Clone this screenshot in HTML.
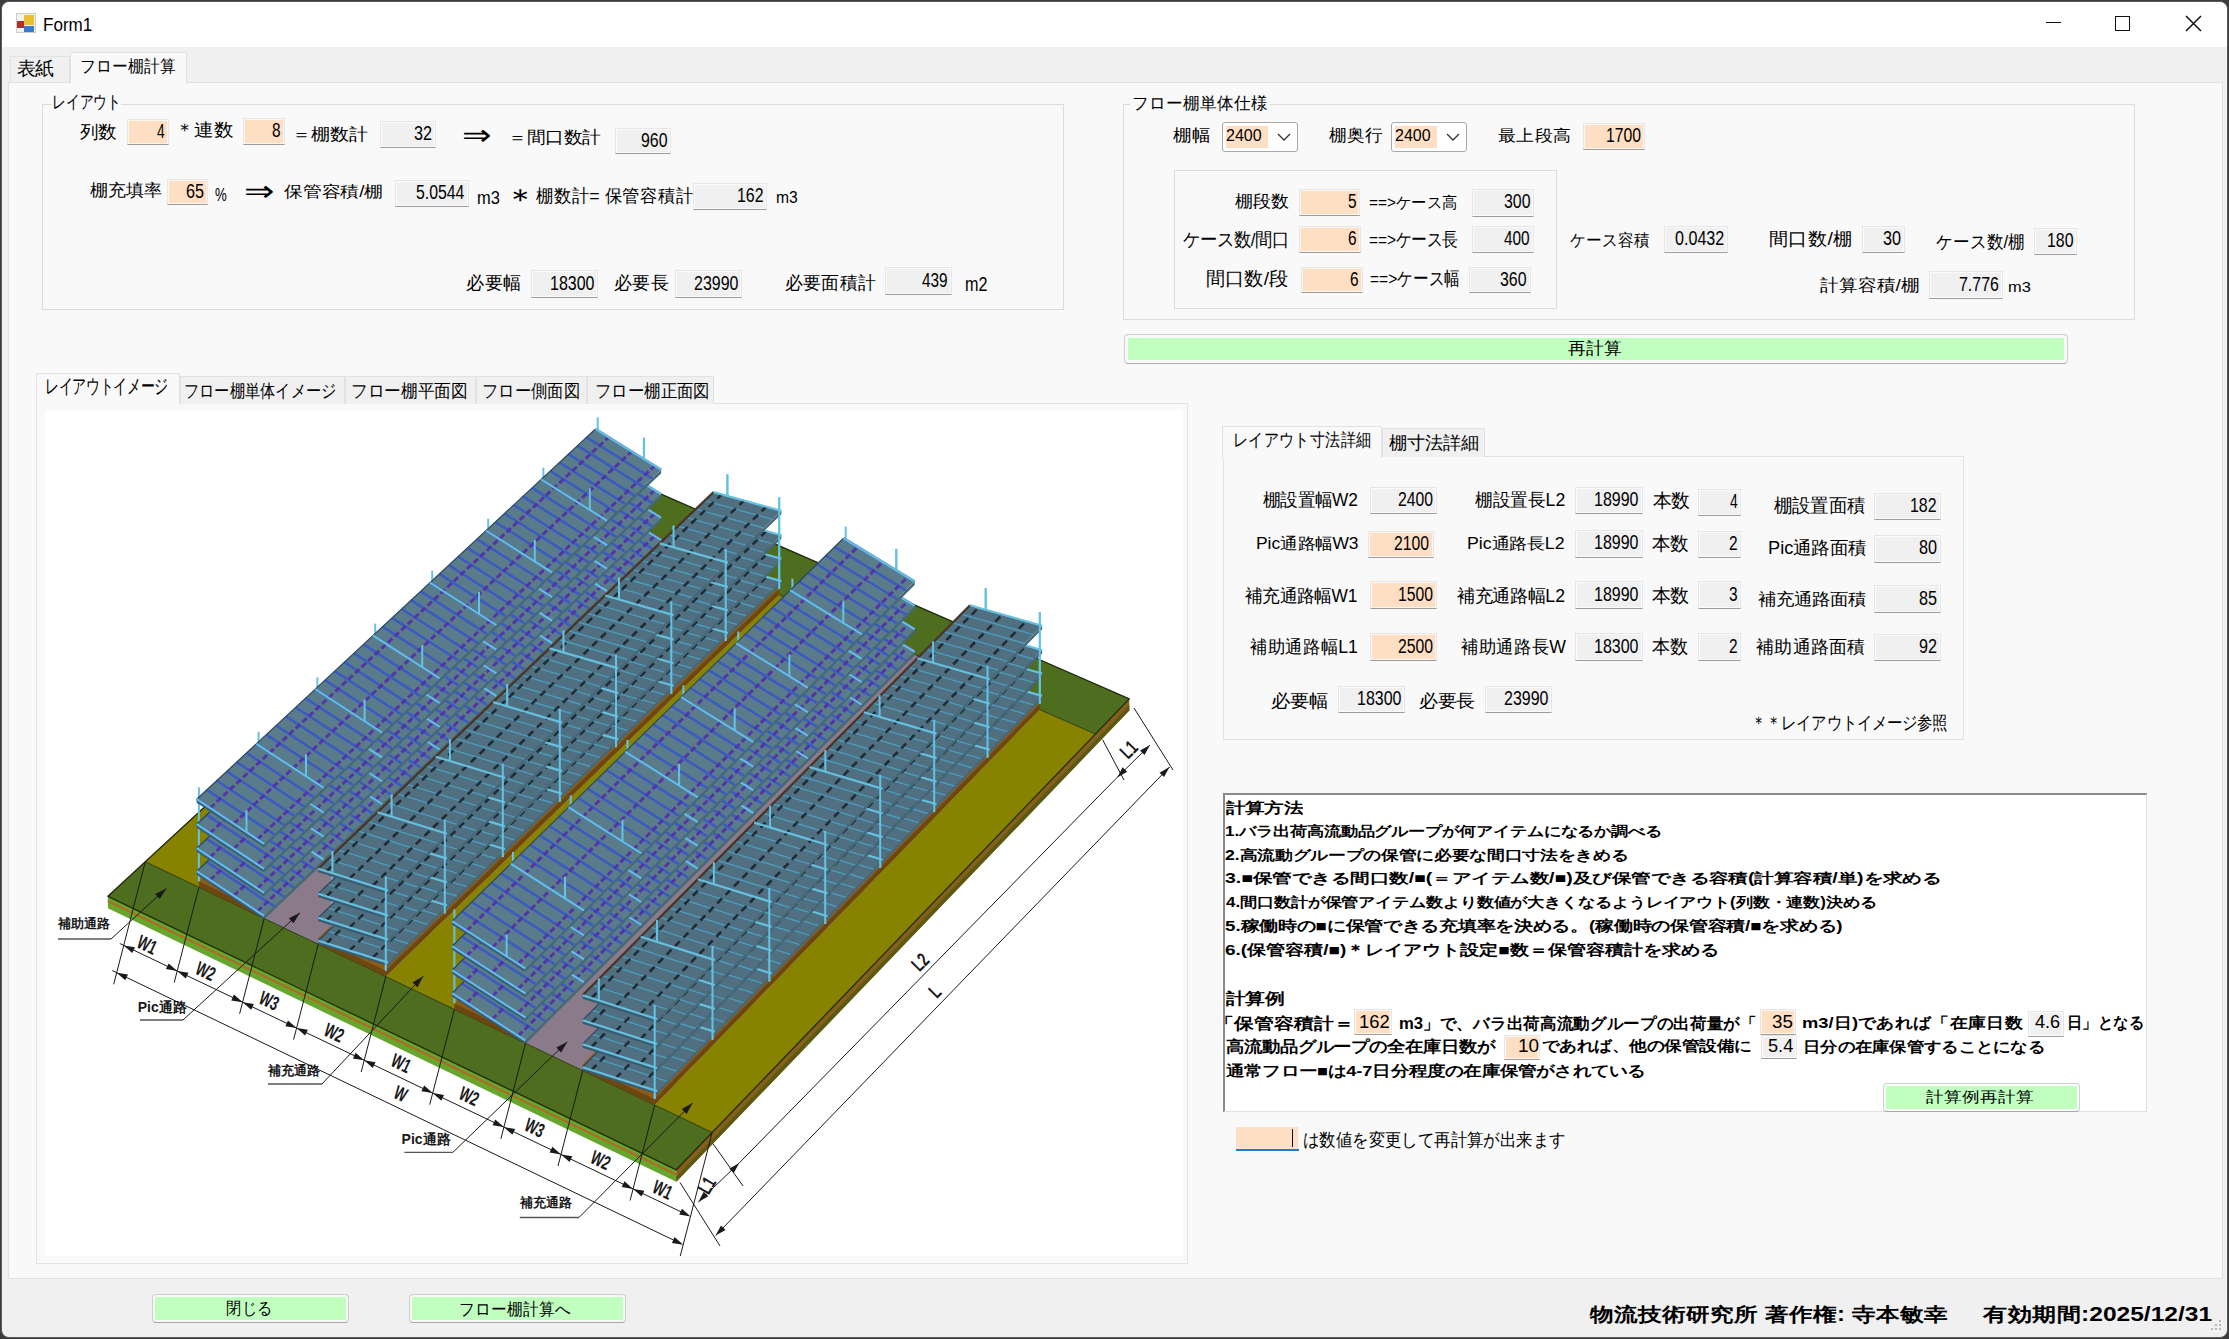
<!DOCTYPE html><html><head><meta charset="utf-8"><style>
html,body{margin:0;padding:0}
body{width:2229px;height:1339px;position:relative;overflow:hidden;background:#3c3c3c;font-family:'Liberation Sans',sans-serif}
body>div,body>svg{position:absolute}
#win{left:1px;top:1px;width:2227px;height:1337px;background:#f0f0f0;border-radius:8px;border:1px solid #5a5a5a;box-sizing:border-box}
.bx{border:1px solid #e6e6e6;border-bottom:1.6px solid #9c9c9c;box-sizing:border-box;box-shadow:inset 0 0 0 1px rgba(255,255,255,.7)}
.t{font-size:19px;line-height:1;white-space:pre;color:#000;transform-origin:0 0}
.t.b{font-weight:bold}
.t.lat{font-size:18px}
</style></head><body><div id="win"></div>
<div style="left:2.0px;top:2.0px;width:2225.0px;height:45.0px;background:#fff;border-radius:8px 8px 0 0"></div>
<div style="left:16px;top:13px;width:20px;height:20px;background:#f2f2f2;border:1px solid #ccc;box-sizing:border-box"></div>
<div style="left:24.0px;top:15.0px;width:10.0px;height:10.0px;background:#e8c030"></div>
<div style="left:17.0px;top:21.0px;width:7.0px;height:7.0px;background:#b03030"></div>
<div style="left:24.0px;top:26.0px;width:10.0px;height:6.0px;background:#3a7ad0"></div>
<div style="left:2046.0px;top:22.0px;width:15.0px;height:1.0px;background:#111"></div>
<div style="left:2115.0px;top:16.0px;width:15.0px;height:15.0px;border:1.5px solid #111;box-sizing:border-box"></div>
<svg style="position:absolute;left:2185px;top:15px" width="17" height="17"><path d="M1 1L16 16M16 1L1 16" stroke="#111" stroke-width="1.5"/></svg>
<div style="left:10.0px;top:56.0px;width:60.0px;height:27.0px;background:#f0f0f0;border:1px solid #e2e2e2;border-bottom:none;box-sizing:border-box"></div>
<div style="left:8.0px;top:82.0px;width:2215.0px;height:1197.0px;background:#f9f9f9;border:1px solid #e2e2e2;box-sizing:border-box"></div>
<div style="left:70.0px;top:52.0px;width:117.0px;height:32.0px;background:#f9f9f9;border:1px solid #e2e2e2;border-bottom:none;box-sizing:border-box"></div>
<div style="left:42.0px;top:104.0px;width:1022.0px;height:206.0px;border:1px solid #dcdcdc;box-sizing:border-box"></div>
<div style="left:52.0px;top:96.0px;width:69.0px;height:12.0px;background:#f9f9f9"></div>
<div style="left:1123.0px;top:104.0px;width:1012.0px;height:216.0px;border:1px solid #dcdcdc;box-sizing:border-box"></div>
<div style="left:1130.0px;top:96.0px;width:140.0px;height:12.0px;background:#f9f9f9"></div>
<div style="left:1174.0px;top:170.0px;width:383.0px;height:139.0px;border:1px solid #dcdcdc;box-sizing:border-box"></div>
<div style="left:1221.8px;top:122.0px;width:76.2px;height:29.5px;background:#fff;border:1px solid #a8a8a8;border-radius:3px;box-sizing:border-box"></div>
<div style="left:1225.6px;top:126.0px;width:42.9px;height:21.6px;background:#ffdfc3"></div>
<svg style="position:absolute;left:1276.8px;top:133px" width="14" height="9"><path d="M1 1L7 7L13 1" stroke="#333" stroke-width="1.3" fill="none"/></svg>
<div style="left:1391.0px;top:122.0px;width:76.2px;height:29.5px;background:#fff;border:1px solid #a8a8a8;border-radius:3px;box-sizing:border-box"></div>
<div style="left:1394.8px;top:126.0px;width:42.2px;height:21.6px;background:#ffdfc3"></div>
<svg style="position:absolute;left:1446.0px;top:133px" width="14" height="9"><path d="M1 1L7 7L13 1" stroke="#333" stroke-width="1.3" fill="none"/></svg>
<div style="left:1124.0px;top:334.0px;width:944.0px;height:30.0px;background:#c0ffc0;border:1px solid #d0d0d0;border-bottom:1.5px solid #b0b0b0;border-radius:4px;box-sizing:border-box;box-shadow:inset 0 0 0 3px #f9f9f9"></div>
<div style="left:36.0px;top:403.0px;width:1152.0px;height:861.0px;background:#f9f9f9;border:1px solid #e2e2e2;box-sizing:border-box"></div>
<div style="left:45.0px;top:410.0px;width:1138.0px;height:846.0px;background:#fff"></div>
<div style="left:180.0px;top:376.0px;width:164.6px;height:28.0px;background:#f0f0f0;border:1px solid #e2e2e2;border-bottom:none;box-sizing:border-box"></div>
<div style="left:345.0px;top:376.0px;width:130.5px;height:28.0px;background:#f0f0f0;border:1px solid #e2e2e2;border-bottom:none;box-sizing:border-box"></div>
<div style="left:476.0px;top:376.0px;width:110.8px;height:28.0px;background:#f0f0f0;border:1px solid #e2e2e2;border-bottom:none;box-sizing:border-box"></div>
<div style="left:587.0px;top:376.0px;width:127.0px;height:28.0px;background:#f0f0f0;border:1px solid #e2e2e2;border-bottom:none;box-sizing:border-box"></div>
<div style="left:36.0px;top:373.0px;width:144.0px;height:32.0px;background:#f9f9f9;border:1px solid #e2e2e2;border-bottom:none;box-sizing:border-box"></div>
<div style="left:1222.6px;top:456.0px;width:741.9px;height:284.0px;background:#f9f9f9;border:1px solid #e2e2e2;box-sizing:border-box"></div>
<div style="left:1382.0px;top:428.0px;width:102.7px;height:29.0px;background:#f0f0f0;border:1px solid #e2e2e2;border-bottom:none;box-sizing:border-box"></div>
<div style="left:1222.2px;top:425.5px;width:160.2px;height:32.5px;background:#f9f9f9;border:1px solid #e2e2e2;border-bottom:none;box-sizing:border-box"></div>
<div style="left:1222.9px;top:792.8px;width:923.9px;height:319.5px;background:#fff;border-top:2px solid #8a8a8a;border-left:2px solid #8a8a8a;border-right:1px solid #e0e0e0;border-bottom:1px solid #e0e0e0;box-sizing:border-box"></div>
<div style="left:1882.6px;top:1083.2px;width:197.1px;height:28.8px;background:#c0ffc0;border:1px solid #d0d0d0;border-bottom:1.5px solid #a8a8a8;border-radius:4px;box-sizing:border-box;box-shadow:inset 0 0 0 2px #fbfbfb"></div>
<div style="left:1236.0px;top:1127.2px;width:61.9px;height:22.1px;background:#ffdfc3"></div>
<div style="left:1236.0px;top:1149.3px;width:63.0px;height:2.2px;background:#2a78c8"></div>
<div style="left:1292.0px;top:1129.0px;width:1.3px;height:18.0px;background:#111"></div>
<div style="left:151.5px;top:1293.6px;width:197.5px;height:29.8px;background:#c0ffc0;border:1px solid #d0d0d0;border-bottom:1.5px solid #a8a8a8;border-radius:4px;box-sizing:border-box;box-shadow:inset 0 0 0 2px #f8f8f8"></div>
<div style="left:409.0px;top:1293.6px;width:217.0px;height:29.8px;background:#c0ffc0;border:1px solid #d0d0d0;border-bottom:1.5px solid #a8a8a8;border-radius:4px;box-sizing:border-box;box-shadow:inset 0 0 0 2px #f8f8f8"></div>
<div style="left:2219.0px;top:1320.0px;width:2.0px;height:2.0px;background:#b8b8b8"></div>
<div style="left:2215.0px;top:1324.0px;width:2.0px;height:2.0px;background:#b8b8b8"></div>
<div style="left:2219.0px;top:1324.0px;width:2.0px;height:2.0px;background:#b8b8b8"></div>
<div style="left:2211.0px;top:1328.0px;width:2.0px;height:2.0px;background:#b8b8b8"></div>
<div style="left:2215.0px;top:1328.0px;width:2.0px;height:2.0px;background:#b8b8b8"></div>
<div style="left:2219.0px;top:1328.0px;width:2.0px;height:2.0px;background:#b8b8b8"></div>
<div class="bx" style="left:127.0px;top:119.0px;width:41.5px;height:25.6px;background:#ffdfc3"></div>
<div class="bx" style="left:243.0px;top:118.0px;width:42.0px;height:27.0px;background:#ffdfc3"></div>
<div class="bx" style="left:379.6px;top:120.7px;width:56.4px;height:27.1px;background:#f0f0f0"></div>
<div class="bx" style="left:615.0px;top:128.0px;width:56.0px;height:26.0px;background:#f0f0f0"></div>
<div class="bx" style="left:167.0px;top:178.6px;width:40.5px;height:26.4px;background:#ffdfc3"></div>
<div class="bx" style="left:395.0px;top:179.6px;width:73.7px;height:27.1px;background:#f0f0f0"></div>
<div class="bx" style="left:693.0px;top:182.8px;width:74.0px;height:27.2px;background:#f0f0f0"></div>
<div class="bx" style="left:531.0px;top:270.0px;width:66.8px;height:28.0px;background:#f0f0f0"></div>
<div class="bx" style="left:675.0px;top:270.0px;width:66.8px;height:28.0px;background:#f0f0f0"></div>
<div class="bx" style="left:885.0px;top:267.0px;width:67.0px;height:28.0px;background:#f0f0f0"></div>
<div class="bx" style="left:1582.6px;top:123.4px;width:62.4px;height:26.6px;background:#ffdfc3"></div>
<div class="bx" style="left:1299.0px;top:189.0px;width:61.4px;height:26.9px;background:#ffdfc3"></div>
<div class="bx" style="left:1471.6px;top:188.6px;width:62.7px;height:28.0px;background:#f0f0f0"></div>
<div class="bx" style="left:1299.0px;top:226.4px;width:62.0px;height:26.6px;background:#ffdfc3"></div>
<div class="bx" style="left:1472.0px;top:226.4px;width:62.0px;height:26.6px;background:#f0f0f0"></div>
<div class="bx" style="left:1300.5px;top:266.6px;width:62.2px;height:26.8px;background:#ffdfc3"></div>
<div class="bx" style="left:1468.6px;top:266.6px;width:62.1px;height:26.8px;background:#f0f0f0"></div>
<div class="bx" style="left:1663.5px;top:226.0px;width:64.0px;height:27.0px;background:#f0f0f0"></div>
<div class="bx" style="left:1861.6px;top:226.0px;width:43.0px;height:27.0px;background:#f0f0f0"></div>
<div class="bx" style="left:2034.0px;top:227.6px;width:43.0px;height:27.4px;background:#f0f0f0"></div>
<div class="bx" style="left:1929.0px;top:271.0px;width:74.0px;height:27.7px;background:#f0f0f0"></div>
<div class="bx" style="left:1369.7px;top:486.8px;width:67.2px;height:26.9px;background:#f0f0f0"></div>
<div class="bx" style="left:1575.0px;top:487.0px;width:67.6px;height:27.0px;background:#f0f0f0"></div>
<div class="bx" style="left:1698.0px;top:489.0px;width:43.3px;height:26.5px;background:#f0f0f0"></div>
<div class="bx" style="left:1873.5px;top:492.7px;width:67.2px;height:27.3px;background:#f0f0f0"></div>
<div class="bx" style="left:1367.5px;top:531.0px;width:66.1px;height:27.0px;background:#ffdfc3"></div>
<div class="bx" style="left:1575.0px;top:530.0px;width:67.6px;height:27.5px;background:#f0f0f0"></div>
<div class="bx" style="left:1698.0px;top:530.5px;width:43.3px;height:27.5px;background:#f0f0f0"></div>
<div class="bx" style="left:1873.5px;top:534.7px;width:67.2px;height:28.0px;background:#f0f0f0"></div>
<div class="bx" style="left:1369.7px;top:581.0px;width:67.2px;height:28.2px;background:#ffdfc3"></div>
<div class="bx" style="left:1575.0px;top:581.0px;width:67.6px;height:28.0px;background:#f0f0f0"></div>
<div class="bx" style="left:1698.0px;top:581.0px;width:43.3px;height:28.0px;background:#f0f0f0"></div>
<div class="bx" style="left:1873.5px;top:585.4px;width:67.2px;height:28.0px;background:#f0f0f0"></div>
<div class="bx" style="left:1369.7px;top:633.4px;width:67.2px;height:28.0px;background:#ffdfc3"></div>
<div class="bx" style="left:1575.0px;top:633.4px;width:67.6px;height:28.0px;background:#f0f0f0"></div>
<div class="bx" style="left:1698.0px;top:633.4px;width:43.3px;height:28.0px;background:#f0f0f0"></div>
<div class="bx" style="left:1873.5px;top:634.4px;width:67.2px;height:26.3px;background:#f0f0f0"></div>
<div class="bx" style="left:1338.0px;top:686.0px;width:67.4px;height:26.5px;background:#f0f0f0"></div>
<div class="bx" style="left:1485.0px;top:686.0px;width:67.3px;height:26.5px;background:#f0f0f0"></div>
<div class="bx" style="left:1354.0px;top:1009.0px;width:38.2px;height:26.0px;background:#ffdfc3"></div>
<div class="bx" style="left:1759.8px;top:1009.0px;width:36.2px;height:26.0px;background:#ffdfc3"></div>
<div class="bx" style="left:2028.0px;top:1011.0px;width:36.2px;height:25.7px;background:#f0f0f0"></div>
<div class="bx" style="left:1504.4px;top:1035.0px;width:35.9px;height:24.6px;background:#ffdfc3"></div>
<div class="bx" style="left:1760.9px;top:1034.7px;width:36.1px;height:24.7px;background:#f0f0f0"></div>
<svg style="position:absolute;left:45px;top:410px" width="1138" height="846" viewBox="45 410 1138 846"><polygon points="107.9,896.3 676.3,1169.8 676.3,1181.8 107.9,908.3" fill="#66a62c"/>
<line x1="107.9" y1="901.1" x2="676.3" y2="1174.6" stroke="#b06a28" stroke-width="2.2"/>
<polygon points="676.3,1169.8 1129.3,698.9 1129.3,710.6 676.3,1181.8" fill="#86601a"/>
<polygon points="676.3,1176.4 1129.3,705.3 1129.3,710.6 676.3,1181.8" fill="#5a5a12"/>
<polygon points="107.9,896.3 676.3,1169.8 712.2,1132.5 145.3,861.7" fill="#4e6d1e"/>
<polygon points="545.7,491.9 1095.5,734.1 1129.3,698.9 581.1,459.1" fill="#4e6d1e"/>
<polygon points="145.3,861.7 198.9,887.3 597.7,514.8 545.7,491.9" fill="#878300"/>
<polygon points="198.9,887.3 264.2,918.5 661.1,542.7 597.7,514.8" fill="#8c5c18"/>
<polygon points="264.2,918.5 318.2,944.3 713.6,565.8 661.1,542.7" fill="#8a7a8a"/>
<polygon points="318.2,944.3 385.8,976.6 779.2,594.8 713.6,565.8" fill="#8c5c18"/>
<polygon points="385.8,976.6 454.4,1009.3 845.7,624.0 779.2,594.8" fill="#878300"/>
<polygon points="454.4,1009.3 525.5,1043.3 914.7,654.4 845.7,624.0" fill="#8c5c18"/>
<polygon points="525.5,1043.3 582.6,1070.6 970.0,678.8 914.7,654.4" fill="#8a7a8a"/>
<polygon points="582.6,1070.6 654.7,1105.0 1039.8,709.6 970.0,678.8" fill="#8c5c18"/>
<polygon points="654.7,1105.0 712.2,1132.5 1095.5,734.1 1039.8,709.6" fill="#878300"/>
<line x1="145.3" y1="861.7" x2="712.2" y2="1132.5" stroke="#2a3a10" stroke-width="1"/>
<line x1="545.7" y1="491.9" x2="1095.5" y2="734.1" stroke="#2a3a10" stroke-width="1"/>
<polygon points="107.9,896.3 676.3,1169.8 1129.3,698.9 581.1,459.1" fill="none" stroke="#1e2a0a" stroke-width="1.3" stroke-linejoin="round"/>
<polygon points="198.9,881.3 264.2,912.5 264.2,918.5 198.9,887.3" fill="#6e4610"/>
<polygon points="198.9,881.3 264.2,912.5 661.1,536.9 597.7,508.9" fill="#8c5c18"/>
<line x1="198.9" y1="881.3" x2="198.9" y2="787.3" stroke="#66c2e2" stroke-width="2.0"/>
<line x1="246.5" y1="904.0" x2="246.5" y2="810.0" stroke="#66c2e2" stroke-width="2.0"/>
<line x1="258.6" y1="825.5" x2="258.6" y2="731.8" stroke="#66c2e2" stroke-width="2.0"/>
<line x1="306.0" y1="847.9" x2="306.0" y2="754.2" stroke="#66c2e2" stroke-width="2.0"/>
<line x1="317.4" y1="770.6" x2="317.4" y2="677.3" stroke="#66c2e2" stroke-width="2.0"/>
<line x1="364.6" y1="792.6" x2="364.6" y2="699.3" stroke="#66c2e2" stroke-width="2.0"/>
<line x1="375.2" y1="716.6" x2="375.2" y2="623.6" stroke="#66c2e2" stroke-width="2.0"/>
<line x1="422.2" y1="738.3" x2="422.2" y2="645.3" stroke="#66c2e2" stroke-width="2.0"/>
<line x1="432.2" y1="663.5" x2="432.2" y2="570.8" stroke="#66c2e2" stroke-width="2.0"/>
<line x1="479.0" y1="684.8" x2="479.0" y2="592.1" stroke="#66c2e2" stroke-width="2.0"/>
<line x1="488.2" y1="611.1" x2="488.2" y2="518.8" stroke="#66c2e2" stroke-width="2.0"/>
<line x1="534.8" y1="632.2" x2="534.8" y2="539.8" stroke="#66c2e2" stroke-width="2.0"/>
<line x1="543.4" y1="559.6" x2="543.4" y2="467.7" stroke="#66c2e2" stroke-width="2.0"/>
<line x1="589.8" y1="580.3" x2="589.8" y2="488.3" stroke="#66c2e2" stroke-width="2.0"/>
<line x1="597.7" y1="508.9" x2="597.7" y2="417.3" stroke="#66c2e2" stroke-width="2.0"/>
<line x1="643.9" y1="529.3" x2="643.9" y2="437.7" stroke="#66c2e2" stroke-width="2.0"/>
<polygon points="196.7,871.2 264.2,915.8 264.2,919.3 196.7,874.7" fill="#3a5c6e"/>
<polygon points="264.2,915.8 661.1,540.1 661.1,543.6 264.2,919.3" fill="#466878"/>
<polygon points="196.7,871.2 264.2,915.8 661.1,540.1 595.5,499.2" fill="#5a7c8a"/>
<path d="M196.7 871.2L264.2 915.8M206.7 861.9L274.2 906.4M216.7 852.5L284.1 896.9M226.6 843.2L294.0 887.6M236.6 834.0L303.9 878.2M246.5 824.7L313.8 868.8M256.4 815.5L323.7 859.5M266.3 806.3L333.5 850.2M276.1 797.1L343.3 841.0M285.9 788.0L353.0 831.7M295.7 778.8L362.8 822.5M305.5 769.7L372.5 813.3M315.2 760.7L382.2 804.2M324.9 751.6L391.8 795.0M334.6 742.6L401.5 785.9M344.2 733.6L411.1 776.8M353.9 724.6L420.7 767.7M363.5 715.6L430.2 758.7M373.0 706.7L439.7 749.7M382.6 697.8L449.3 740.7M392.1 688.9L458.7 731.7M401.6 680.1L468.2 722.7M411.1 671.2L477.6 713.8M420.6 662.4L487.0 704.9M430.0 653.6L496.4 696.0M439.4 644.8L505.8 687.2M448.8 636.1L515.1 678.3M458.1 627.4L524.4 669.5M467.5 618.7L533.7 660.8M476.8 610.0L543.0 652.0M486.0 601.3L552.2 643.3M495.3 592.7L561.4 634.5M504.5 584.1L570.6 625.8M513.7 575.5L579.7 617.2M522.9 566.9L588.9 608.5M532.1 558.4L598.0 599.9M541.2 549.9L607.1 591.3M550.3 541.4L616.2 582.7M559.4 532.9L625.2 574.2M568.5 524.5L634.2 565.6M577.5 516.0L643.2 557.1M586.5 507.6L652.2 548.6M595.5 499.2L661.1 540.1" stroke="#3858c8" stroke-width="2.6" fill="none" stroke-opacity="0.9"/>
<path d="M210.1 880.1L608.6 507.4M233.7 895.7L631.6 521.7M257.4 911.3L654.6 536.0" stroke="#5232a8" stroke-width="3" fill="none" stroke-opacity="0.95" stroke-dasharray="6,3"/>
<line x1="196.7" y1="871.2" x2="595.5" y2="499.2" stroke="#2a4860" stroke-width="1.2"/>
<path d="M196.7 871.2L264.2 915.8M256.4 815.5L323.7 859.5M315.2 760.7L382.2 804.2M373.0 706.7L439.7 749.7M430.0 653.6L496.4 696.0M486.0 601.3L552.2 643.3M541.2 549.9L607.1 591.3M595.5 499.2L661.1 540.1" stroke="#66c2e2" stroke-width="2.2" fill="none" stroke-opacity="0.95"/>
<polygon points="196.7,848.2 264.2,892.8 264.2,896.3 196.7,851.7" fill="#3a5c6e"/>
<polygon points="264.2,892.8 661.1,517.7 661.1,521.1 264.2,896.3" fill="#466878"/>
<polygon points="196.7,848.2 264.2,892.8 661.1,517.7 595.5,476.8" fill="#5a7c8a"/>
<path d="M196.7 848.2L264.2 892.8M206.7 838.9L274.2 883.4M216.7 829.6L284.1 874.0M226.6 820.3L294.0 864.6M236.6 811.0L303.9 855.2M246.5 801.8L313.8 845.9M256.4 792.6L323.7 836.6M266.3 783.4L333.5 827.3M276.1 774.2L343.3 818.1M285.9 765.1L353.0 808.9M295.7 756.0L362.8 799.6M305.5 746.9L372.5 790.5M315.2 737.8L382.2 781.3M324.9 728.8L391.8 772.2M334.6 719.8L401.5 763.1M344.2 710.8L411.1 754.0M353.9 701.8L420.7 744.9M363.5 692.9L430.2 735.9M373.0 684.0L439.7 726.9M382.6 675.1L449.3 717.9M392.1 666.2L458.7 709.0M401.6 657.3L468.2 700.0M411.1 648.5L477.6 691.1M420.6 639.7L487.0 682.2M430.0 630.9L496.4 673.4M439.4 622.2L505.8 664.5M448.8 613.4L515.1 655.7M458.1 604.7L524.4 646.9M467.5 596.1L533.7 638.1M476.8 587.4L543.0 629.4M486.0 578.7L552.2 620.7M495.3 570.1L561.4 612.0M504.5 561.5L570.6 603.3M513.7 553.0L579.7 594.6M522.9 544.4L588.9 586.0M532.1 535.9L598.0 577.4M541.2 527.4L607.1 568.8M550.3 518.9L616.2 560.2M559.4 510.4L625.2 551.7M568.5 502.0L634.2 543.2M577.5 493.6L643.2 534.7M586.5 485.2L652.2 526.2M595.5 476.8L661.1 517.7" stroke="#3858c8" stroke-width="2.6" fill="none" stroke-opacity="0.9"/>
<path d="M210.1 857.1L608.6 485.0M233.7 872.7L631.6 499.3M257.4 888.3L654.6 513.6" stroke="#5232a8" stroke-width="3" fill="none" stroke-opacity="0.95" stroke-dasharray="6,3"/>
<line x1="196.7" y1="848.2" x2="595.5" y2="476.8" stroke="#2a4860" stroke-width="1.2"/>
<path d="M196.7 848.2L264.2 892.8M256.4 792.6L323.7 836.6M315.2 737.8L382.2 781.3M373.0 684.0L439.7 726.9M430.0 630.9L496.4 673.4M486.0 578.7L552.2 620.7M541.2 527.4L607.1 568.8M595.5 476.8L661.1 517.7" stroke="#66c2e2" stroke-width="2.2" fill="none" stroke-opacity="0.95"/>
<polygon points="196.7,824.2 264.2,868.8 264.2,872.3 196.7,827.7" fill="#3a5c6e"/>
<polygon points="264.2,868.8 661.1,494.3 661.1,497.7 264.2,872.3" fill="#466878"/>
<polygon points="196.7,824.2 264.2,868.8 661.1,494.3 595.5,453.4" fill="#5a7c8a"/>
<path d="M196.7 824.2L264.2 868.8M206.7 814.9L274.2 859.4M216.7 805.6L284.1 850.0M226.6 796.3L294.0 840.6M236.6 787.1L303.9 831.3M246.5 777.9L313.8 822.0M256.4 768.7L323.7 812.7M266.3 759.5L333.5 803.4M276.1 750.3L343.3 794.2M285.9 741.2L353.0 785.0M295.7 732.1L362.8 775.8M305.5 723.1L372.5 766.6M315.2 714.0L382.2 757.5M324.9 705.0L391.8 748.4M334.6 696.0L401.5 739.3M344.2 687.0L411.1 730.2M353.9 678.0L420.7 721.2M363.5 669.1L430.2 712.2M373.0 660.2L439.7 703.2M382.6 651.3L449.3 694.2M392.1 642.5L458.7 685.3M401.6 633.6L468.2 676.3M411.1 624.8L477.6 667.4M420.6 616.0L487.0 658.6M430.0 607.3L496.4 649.7M439.4 598.5L505.8 640.9M448.8 589.8L515.1 632.1M458.1 581.1L524.4 623.3M467.5 572.5L533.7 614.5M476.8 563.8L543.0 605.8M486.0 555.2L552.2 597.1M495.3 546.6L561.4 588.4M504.5 538.0L570.6 579.7M513.7 529.4L579.7 571.1M522.9 520.9L588.9 562.5M532.1 512.4L598.0 553.9M541.2 503.9L607.1 545.3M550.3 495.4L616.2 536.8M559.4 487.0L625.2 528.2M568.5 478.5L634.2 519.7M577.5 470.1L643.2 511.2M586.5 461.8L652.2 502.8M595.5 453.4L661.1 494.3" stroke="#3858c8" stroke-width="2.6" fill="none" stroke-opacity="0.9"/>
<path d="M210.1 833.1L608.6 461.6M233.7 848.7L631.6 475.9M257.4 864.3L654.6 490.2" stroke="#5232a8" stroke-width="3" fill="none" stroke-opacity="0.95" stroke-dasharray="6,3"/>
<line x1="196.7" y1="824.2" x2="595.5" y2="453.4" stroke="#2a4860" stroke-width="1.2"/>
<path d="M196.7 824.2L264.2 868.8M256.4 768.7L323.7 812.7M315.2 714.0L382.2 757.5M373.0 660.2L439.7 703.2M430.0 607.3L496.4 649.7M486.0 555.2L552.2 597.1M541.2 503.9L607.1 545.3M595.5 453.4L661.1 494.3" stroke="#66c2e2" stroke-width="2.2" fill="none" stroke-opacity="0.95"/>
<polygon points="196.7,799.2 264.2,843.8 264.2,847.3 196.7,802.7" fill="#3a5c6e"/>
<polygon points="264.2,843.8 661.1,469.9 661.1,473.4 264.2,847.3" fill="#466878"/>
<polygon points="196.7,799.2 264.2,843.8 661.1,469.9 595.5,429.0" fill="#5a7c8a"/>
<path d="M196.7 799.2L264.2 843.8M206.7 789.9L274.2 834.4M216.7 780.6L284.1 825.0M226.6 771.4L294.0 815.7M236.6 762.1L303.9 806.4M246.5 752.9L313.8 797.1M256.4 743.8L323.7 787.8M266.3 734.6L333.5 778.5M276.1 725.5L343.3 769.3M285.9 716.4L353.0 760.1M295.7 707.3L362.8 750.9M305.5 698.2L372.5 741.8M315.2 689.2L382.2 732.7M324.9 680.2L391.8 723.6M334.6 671.2L401.5 714.5M344.2 662.2L411.1 705.4M353.9 653.3L420.7 696.4M363.5 644.4L430.2 687.4M373.0 635.5L439.7 678.4M382.6 626.6L449.3 669.5M392.1 617.8L458.7 660.5M401.6 609.0L468.2 651.6M411.1 600.2L477.6 642.8M420.6 591.4L487.0 633.9M430.0 582.6L496.4 625.1M439.4 573.9L505.8 616.3M448.8 565.2L515.1 607.5M458.1 556.5L524.4 598.7M467.5 547.9L533.7 590.0M476.8 539.2L543.0 581.2M486.0 530.6L552.2 572.5M495.3 522.0L561.4 563.9M504.5 513.5L570.6 555.2M513.7 504.9L579.7 546.6M522.9 496.4L588.9 538.0M532.1 487.9L598.0 529.4M541.2 479.4L607.1 520.8M550.3 471.0L616.2 512.3M559.4 462.5L625.2 503.8M568.5 454.1L634.2 495.3M577.5 445.7L643.2 486.8M586.5 437.4L652.2 478.4M595.5 429.0L661.1 469.9" stroke="#3858c8" stroke-width="2.6" fill="none" stroke-opacity="0.9"/>
<path d="M210.1 808.1L608.6 437.2M233.7 823.7L631.6 451.5M257.4 839.3L654.6 465.8" stroke="#5232a8" stroke-width="3" fill="none" stroke-opacity="0.95" stroke-dasharray="6,3"/>
<line x1="196.7" y1="799.2" x2="595.5" y2="429.0" stroke="#2a4860" stroke-width="1.2"/>
<path d="M196.7 799.2L264.2 843.8M256.4 743.8L323.7 787.8M315.2 689.2L382.2 732.7M373.0 635.5L439.7 678.4M430.0 582.6L496.4 625.1M486.0 530.6L552.2 572.5M541.2 479.4L607.1 520.8M595.5 429.0L661.1 469.9" stroke="#66c2e2" stroke-width="2.2" fill="none" stroke-opacity="0.95"/>
<line x1="246.5" y1="832.0" x2="246.5" y2="810.0" stroke="#66c2e2" stroke-width="2.0"/>
<line x1="306.0" y1="776.1" x2="306.0" y2="754.2" stroke="#66c2e2" stroke-width="2.0"/>
<line x1="364.6" y1="721.2" x2="364.6" y2="699.3" stroke="#66c2e2" stroke-width="2.0"/>
<line x1="422.2" y1="667.1" x2="422.2" y2="645.3" stroke="#66c2e2" stroke-width="2.0"/>
<line x1="479.0" y1="613.8" x2="479.0" y2="592.1" stroke="#66c2e2" stroke-width="2.0"/>
<line x1="534.8" y1="561.4" x2="534.8" y2="539.8" stroke="#66c2e2" stroke-width="2.0"/>
<line x1="589.8" y1="509.9" x2="589.8" y2="488.3" stroke="#66c2e2" stroke-width="2.0"/>
<line x1="643.9" y1="459.1" x2="643.9" y2="437.7" stroke="#66c2e2" stroke-width="2.0"/>
<polygon points="318.2,938.3 385.8,970.6 385.8,976.6 318.2,944.3" fill="#6e4610"/>
<polygon points="318.2,938.3 385.8,970.6 779.2,588.9 713.6,560.0" fill="#8c5c18"/>
<polygon points="385.8,970.6 779.2,588.9 779.2,594.8 385.8,976.6" fill="#6e4610"/>
<line x1="332.4" y1="945.1" x2="332.4" y2="851.1" stroke="#66c2e2" stroke-width="2.0"/>
<line x1="385.8" y1="970.6" x2="385.8" y2="876.6" stroke="#66c2e2" stroke-width="2.0"/>
<line x1="391.6" y1="888.3" x2="391.6" y2="794.6" stroke="#66c2e2" stroke-width="2.0"/>
<line x1="444.8" y1="913.4" x2="444.8" y2="819.7" stroke="#66c2e2" stroke-width="2.0"/>
<line x1="449.9" y1="832.4" x2="449.9" y2="739.1" stroke="#66c2e2" stroke-width="2.0"/>
<line x1="502.8" y1="857.1" x2="502.8" y2="763.8" stroke="#66c2e2" stroke-width="2.0"/>
<line x1="507.2" y1="777.4" x2="507.2" y2="684.4" stroke="#66c2e2" stroke-width="2.0"/>
<line x1="559.8" y1="801.7" x2="559.8" y2="708.7" stroke="#66c2e2" stroke-width="2.0"/>
<line x1="563.5" y1="723.3" x2="563.5" y2="630.7" stroke="#66c2e2" stroke-width="2.0"/>
<line x1="616.0" y1="747.2" x2="616.0" y2="654.6" stroke="#66c2e2" stroke-width="2.0"/>
<line x1="619.0" y1="670.1" x2="619.0" y2="577.8" stroke="#66c2e2" stroke-width="2.0"/>
<line x1="671.3" y1="693.6" x2="671.3" y2="601.3" stroke="#66c2e2" stroke-width="2.0"/>
<line x1="673.6" y1="617.7" x2="673.6" y2="525.7" stroke="#66c2e2" stroke-width="2.0"/>
<line x1="725.7" y1="640.9" x2="725.7" y2="548.9" stroke="#66c2e2" stroke-width="2.0"/>
<line x1="727.4" y1="566.1" x2="727.4" y2="474.4" stroke="#66c2e2" stroke-width="2.0"/>
<line x1="779.2" y1="588.9" x2="779.2" y2="497.3" stroke="#66c2e2" stroke-width="2.0"/>
<polygon points="318.2,940.7 388.1,962.6 388.1,966.1 318.2,944.2" fill="#3a5c6e"/>
<polygon points="388.1,962.6 781.4,581.1 781.4,584.5 388.1,966.1" fill="#466878"/>
<polygon points="318.2,940.7 388.1,962.6 781.4,581.1 713.6,562.3" fill="#506f80"/>
<path d="M318.2 940.7L388.1 962.6M328.1 931.2L398.0 953.1M338.0 921.7L407.8 943.5M347.9 912.2L417.7 933.9M357.8 902.8L427.5 924.4M367.6 893.4L437.3 914.9M377.4 884.0L447.0 905.5M387.2 874.6L456.8 896.0M397.0 865.3L466.5 886.6M406.7 856.0L476.1 877.2M416.4 846.7L485.8 867.9M426.1 837.4L495.4 858.5M435.7 828.2L505.0 849.2M445.3 819.0L514.6 839.9M454.9 809.8L524.1 830.6M464.5 800.7L533.7 821.4M474.1 791.5L543.2 812.2M483.6 782.4L552.6 803.0M493.1 773.3L562.1 793.8M502.5 764.3L571.5 784.7M512.0 755.2L580.9 775.6M521.4 746.2L590.3 766.5M530.8 737.2L599.6 757.4M540.2 728.3L608.9 748.4M549.5 719.3L618.2 739.4M558.8 710.4L627.5 730.4M568.1 701.5L636.7 721.4M577.4 692.6L646.0 712.5M586.6 683.8L655.2 703.6M595.9 675.0L664.3 694.7M605.1 666.2L673.5 685.8M614.2 657.4L682.6 676.9M623.4 648.6L691.7 668.1M632.5 639.9L700.8 659.3M641.6 631.2L709.8 650.5M650.7 622.5L718.9 641.8M659.7 613.8L727.9 633.0M668.8 605.2L736.8 624.3M677.8 596.6L745.8 615.6M686.8 588.0L754.7 607.0M695.7 579.4L763.6 598.3M704.7 570.9L772.5 589.7M713.6 562.3L781.4 581.1" stroke="#48a8cc" stroke-width="1.4" fill="none" stroke-opacity="0.8"/>
<path d="M326.5 943.3L721.7 564.6M349.6 950.5L744.0 570.7M372.6 957.8L766.4 576.9" stroke="#1a2026" stroke-width="2.6" fill="none" stroke-opacity="0.85" stroke-dasharray="7,5"/>
<line x1="318.2" y1="940.7" x2="713.6" y2="562.3" stroke="#2a4860" stroke-width="1.2"/>
<path d="M318.2 940.7L388.1 962.6M377.4 884.0L447.0 905.5M435.7 828.2L505.0 849.2M493.1 773.3L562.1 793.8M549.5 719.3L618.2 739.4M605.1 666.2L673.5 685.8M659.7 613.8L727.9 633.0M713.6 562.3L781.4 581.1" stroke="#66c2e2" stroke-width="2.2" fill="none" stroke-opacity="0.95"/>
<polygon points="318.2,917.7 388.1,939.6 388.1,943.1 318.2,921.2" fill="#3a5c6e"/>
<polygon points="388.1,939.6 781.4,558.7 781.4,562.1 388.1,943.1" fill="#466878"/>
<polygon points="318.2,917.7 388.1,939.6 781.4,558.7 713.6,539.9" fill="#506f80"/>
<path d="M318.2 917.7L388.1 939.6M328.1 908.2L398.0 930.1M338.0 898.7L407.8 920.5M347.9 889.3L417.7 911.0M357.8 879.8L427.5 901.5M367.6 870.4L437.3 892.0M377.4 861.1L447.0 882.5M387.2 851.7L456.8 873.1M397.0 842.4L466.5 863.7M406.7 833.1L476.1 854.3M416.4 823.8L485.8 845.0M426.1 814.6L495.4 835.7M435.7 805.4L505.0 826.4M445.3 796.2L514.6 817.1M454.9 787.0L524.1 807.8M464.5 777.9L533.7 798.6M474.1 768.7L543.2 789.4M483.6 759.7L552.6 780.2M493.1 750.6L562.1 771.1M502.5 741.5L571.5 762.0M512.0 732.5L580.9 752.9M521.4 723.5L590.3 743.8M530.8 714.5L599.6 734.7M540.2 705.6L608.9 725.7M549.5 696.7L618.2 716.7M558.8 687.8L627.5 707.7M568.1 678.9L636.7 698.8M577.4 670.0L646.0 689.8M586.6 661.2L655.2 680.9M595.9 652.4L664.3 672.1M605.1 643.6L673.5 663.2M614.2 634.8L682.6 654.4M623.4 626.1L691.7 645.5M632.5 617.4L700.8 636.7M641.6 608.7L709.8 628.0M650.7 600.0L718.9 619.2M659.7 591.3L727.9 610.5M668.8 582.7L736.8 601.8M677.8 574.1L745.8 593.1M686.8 565.5L754.7 584.5M695.7 557.0L763.6 575.9M704.7 548.4L772.5 567.3M713.6 539.9L781.4 558.7" stroke="#48a8cc" stroke-width="1.4" fill="none" stroke-opacity="0.8"/>
<path d="M326.5 920.3L721.7 542.2M349.6 927.5L744.0 548.3M372.6 934.8L766.4 554.5" stroke="#1a2026" stroke-width="2.6" fill="none" stroke-opacity="0.85" stroke-dasharray="7,5"/>
<line x1="318.2" y1="917.7" x2="713.6" y2="539.9" stroke="#2a4860" stroke-width="1.2"/>
<path d="M318.2 917.7L388.1 939.6M377.4 861.1L447.0 882.5M435.7 805.4L505.0 826.4M493.1 750.6L562.1 771.1M549.5 696.7L618.2 716.7M605.1 643.6L673.5 663.2M659.7 591.3L727.9 610.5M713.6 539.9L781.4 558.7" stroke="#66c2e2" stroke-width="2.2" fill="none" stroke-opacity="0.95"/>
<polygon points="318.2,893.7 388.1,915.6 388.1,919.1 318.2,897.2" fill="#3a5c6e"/>
<polygon points="388.1,915.6 781.4,535.3 781.4,538.7 388.1,919.1" fill="#466878"/>
<polygon points="318.2,893.7 388.1,915.6 781.4,535.3 713.6,516.5" fill="#506f80"/>
<path d="M318.2 893.7L388.1 915.6M328.1 884.2L398.0 906.1M338.0 874.7L407.8 896.5M347.9 865.3L417.7 887.0M357.8 855.9L427.5 877.5M367.6 846.5L437.3 868.1M377.4 837.2L447.0 858.6M387.2 827.8L456.8 849.2M397.0 818.5L466.5 839.8M406.7 809.2L476.1 830.5M416.4 800.0L485.8 821.1M426.1 790.8L495.4 811.8M435.7 781.5L505.0 802.5M445.3 772.4L514.6 793.3M454.9 763.2L524.1 784.0M464.5 754.1L533.7 774.8M474.1 745.0L543.2 765.6M483.6 735.9L552.6 756.5M493.1 726.8L562.1 747.4M502.5 717.8L571.5 738.2M512.0 708.8L580.9 729.2M521.4 699.8L590.3 720.1M530.8 690.8L599.6 711.1M540.2 681.9L608.9 702.0M549.5 673.0L618.2 693.1M558.8 664.1L627.5 684.1M568.1 655.2L636.7 675.1M577.4 646.4L646.0 666.2M586.6 637.6L655.2 657.3M595.9 628.8L664.3 648.5M605.1 620.0L673.5 639.6M614.2 611.3L682.6 630.8M623.4 602.5L691.7 622.0M632.5 593.8L700.8 613.2M641.6 585.2L709.8 604.5M650.7 576.5L718.9 595.7M659.7 567.9L727.9 587.0M668.8 559.2L736.8 578.3M677.8 550.7L745.8 569.7M686.8 542.1L754.7 561.0M695.7 533.5L763.6 552.4M704.7 525.0L772.5 543.8M713.6 516.5L781.4 535.3" stroke="#48a8cc" stroke-width="1.4" fill="none" stroke-opacity="0.8"/>
<path d="M326.5 896.3L721.7 518.8M349.6 903.5L744.0 524.9M372.6 910.8L766.4 531.1" stroke="#1a2026" stroke-width="2.6" fill="none" stroke-opacity="0.85" stroke-dasharray="7,5"/>
<line x1="318.2" y1="893.7" x2="713.6" y2="516.5" stroke="#2a4860" stroke-width="1.2"/>
<path d="M318.2 893.7L388.1 915.6M377.4 837.2L447.0 858.6M435.7 781.5L505.0 802.5M493.1 726.8L562.1 747.4M549.5 673.0L618.2 693.1M605.1 620.0L673.5 639.6M659.7 567.9L727.9 587.0M713.6 516.5L781.4 535.3" stroke="#66c2e2" stroke-width="2.2" fill="none" stroke-opacity="0.95"/>
<polygon points="318.2,868.7 388.1,890.6 388.1,894.1 318.2,872.2" fill="#3a5c6e"/>
<polygon points="388.1,890.6 781.4,510.9 781.4,514.3 388.1,894.1" fill="#466878"/>
<polygon points="318.2,868.7 388.1,890.6 781.4,510.9 713.6,492.1" fill="#506f80"/>
<path d="M318.2 868.7L388.1 890.6M328.1 859.2L398.0 881.1M338.0 849.8L407.8 871.6M347.9 840.3L417.7 862.1M357.8 831.0L427.5 852.6M367.6 821.6L437.3 843.1M377.4 812.2L447.0 833.7M387.2 802.9L456.8 824.3M397.0 793.6L466.5 814.9M406.7 784.4L476.1 805.6M416.4 775.1L485.8 796.3M426.1 765.9L495.4 787.0M435.7 756.7L505.0 777.7M445.3 747.6L514.6 768.5M454.9 738.4L524.1 759.2M464.5 729.3L533.7 750.1M474.1 720.2L543.2 740.9M483.6 711.1L552.6 731.7M493.1 702.1L562.1 722.6M502.5 693.1L571.5 713.5M512.0 684.1L580.9 704.5M521.4 675.1L590.3 695.4M530.8 666.2L599.6 686.4M540.2 657.3L608.9 677.4M549.5 648.4L618.2 668.4M558.8 639.5L627.5 659.5M568.1 630.6L636.7 650.5M577.4 621.8L646.0 641.6M586.6 613.0L655.2 632.8M595.9 604.2L664.3 623.9M605.1 595.5L673.5 615.1M614.2 586.7L682.6 606.3M623.4 578.0L691.7 597.5M632.5 569.3L700.8 588.7M641.6 560.7L709.8 580.0M650.7 552.0L718.9 571.3M659.7 543.4L727.9 562.6M668.8 534.8L736.8 553.9M677.8 526.2L745.8 545.2M686.8 517.7L754.7 536.6M695.7 509.1L763.6 528.0M704.7 500.6L772.5 519.4M713.6 492.1L781.4 510.9" stroke="#48a8cc" stroke-width="1.4" fill="none" stroke-opacity="0.8"/>
<path d="M326.5 871.3L721.7 494.4M349.6 878.5L744.0 500.5M372.6 885.8L766.4 506.7" stroke="#1a2026" stroke-width="2.6" fill="none" stroke-opacity="0.85" stroke-dasharray="7,5"/>
<line x1="318.2" y1="868.7" x2="713.6" y2="492.1" stroke="#2a4860" stroke-width="1.2"/>
<line x1="318.2" y1="868.7" x2="713.6" y2="492.1" stroke="#4a3426" stroke-width="2.2"/>
<path d="M318.2 868.7L388.1 890.6M377.4 812.2L447.0 833.7M435.7 756.7L505.0 777.7M493.1 702.1L562.1 722.6M549.5 648.4L618.2 668.4M605.1 595.5L673.5 615.1M659.7 543.4L727.9 562.6M713.6 492.1L781.4 510.9" stroke="#66c2e2" stroke-width="2.2" fill="none" stroke-opacity="0.95"/>
<line x1="385.8" y1="970.6" x2="385.8" y2="876.6" stroke="#66c2e2" stroke-width="2.0"/>
<line x1="444.8" y1="913.4" x2="444.8" y2="819.7" stroke="#66c2e2" stroke-width="2.0"/>
<line x1="502.8" y1="857.1" x2="502.8" y2="763.8" stroke="#66c2e2" stroke-width="2.0"/>
<line x1="559.8" y1="801.7" x2="559.8" y2="708.7" stroke="#66c2e2" stroke-width="2.0"/>
<line x1="616.0" y1="747.2" x2="616.0" y2="654.6" stroke="#66c2e2" stroke-width="2.0"/>
<line x1="671.3" y1="693.6" x2="671.3" y2="601.3" stroke="#66c2e2" stroke-width="2.0"/>
<line x1="725.7" y1="640.9" x2="725.7" y2="548.9" stroke="#66c2e2" stroke-width="2.0"/>
<line x1="779.2" y1="588.9" x2="779.2" y2="497.3" stroke="#66c2e2" stroke-width="2.0"/>
<line x1="332.4" y1="873.1" x2="332.4" y2="851.1" stroke="#66c2e2" stroke-width="2.0"/>
<line x1="391.6" y1="816.5" x2="391.6" y2="794.6" stroke="#66c2e2" stroke-width="2.0"/>
<line x1="449.9" y1="760.9" x2="449.9" y2="739.1" stroke="#66c2e2" stroke-width="2.0"/>
<line x1="507.2" y1="706.2" x2="507.2" y2="684.4" stroke="#66c2e2" stroke-width="2.0"/>
<line x1="563.5" y1="652.4" x2="563.5" y2="630.7" stroke="#66c2e2" stroke-width="2.0"/>
<line x1="619.0" y1="599.4" x2="619.0" y2="577.8" stroke="#66c2e2" stroke-width="2.0"/>
<line x1="673.6" y1="547.2" x2="673.6" y2="525.7" stroke="#66c2e2" stroke-width="2.0"/>
<line x1="727.4" y1="495.9" x2="727.4" y2="474.4" stroke="#66c2e2" stroke-width="2.0"/>
<polygon points="454.4,1003.3 525.5,1037.3 525.5,1043.3 454.4,1009.3" fill="#6e4610"/>
<polygon points="454.4,1003.3 525.5,1037.3 914.7,648.6 845.7,618.2" fill="#8c5c18"/>
<line x1="454.4" y1="1003.3" x2="454.4" y2="909.3" stroke="#66c2e2" stroke-width="2.0"/>
<line x1="506.6" y1="1028.3" x2="506.6" y2="934.3" stroke="#66c2e2" stroke-width="2.0"/>
<line x1="513.0" y1="945.6" x2="513.0" y2="851.9" stroke="#66c2e2" stroke-width="2.0"/>
<line x1="565.0" y1="970.1" x2="565.0" y2="876.5" stroke="#66c2e2" stroke-width="2.0"/>
<line x1="570.7" y1="888.8" x2="570.7" y2="795.5" stroke="#66c2e2" stroke-width="2.0"/>
<line x1="622.5" y1="912.9" x2="622.5" y2="819.6" stroke="#66c2e2" stroke-width="2.0"/>
<line x1="627.5" y1="832.9" x2="627.5" y2="739.9" stroke="#66c2e2" stroke-width="2.0"/>
<line x1="679.1" y1="856.7" x2="679.1" y2="763.7" stroke="#66c2e2" stroke-width="2.0"/>
<line x1="683.4" y1="777.9" x2="683.4" y2="685.3" stroke="#66c2e2" stroke-width="2.0"/>
<line x1="734.7" y1="801.3" x2="734.7" y2="708.7" stroke="#66c2e2" stroke-width="2.0"/>
<line x1="738.3" y1="723.8" x2="738.3" y2="631.5" stroke="#66c2e2" stroke-width="2.0"/>
<line x1="789.4" y1="746.9" x2="789.4" y2="654.5" stroke="#66c2e2" stroke-width="2.0"/>
<line x1="792.4" y1="670.6" x2="792.4" y2="578.6" stroke="#66c2e2" stroke-width="2.0"/>
<line x1="843.3" y1="693.3" x2="843.3" y2="601.3" stroke="#66c2e2" stroke-width="2.0"/>
<line x1="845.7" y1="618.2" x2="845.7" y2="526.5" stroke="#66c2e2" stroke-width="2.0"/>
<line x1="896.3" y1="640.5" x2="896.3" y2="548.9" stroke="#66c2e2" stroke-width="2.0"/>
<polygon points="452.1,993.2 525.5,1040.5 525.5,1044.0 452.1,996.7" fill="#3a5c6e"/>
<polygon points="525.5,1040.5 914.7,651.7 914.7,655.2 525.5,1044.0" fill="#466878"/>
<polygon points="452.1,993.2 525.5,1040.5 914.7,651.7 843.5,608.4" fill="#5a7c8a"/>
<path d="M452.1 993.2L525.5 1040.5M461.9 983.5L535.3 1030.8M471.7 973.9L545.1 1021.0M481.5 964.3L554.8 1011.3M491.3 954.7L564.5 1001.6M501.0 945.1L574.2 991.9M510.8 935.5L583.9 982.2M520.4 926.0L593.5 972.6M530.1 916.5L603.1 963.0M539.7 907.0L612.7 953.5M549.3 897.6L622.3 943.9M558.9 888.2L631.8 934.4M568.5 878.8L641.3 924.9M578.0 869.4L650.8 915.4M587.5 860.1L660.2 906.0M597.0 850.8L669.6 896.6M606.4 841.5L679.0 887.2M615.9 832.2L688.4 877.8M625.3 823.0L697.7 868.5M634.6 813.8L707.1 859.2M644.0 804.6L716.4 849.9M653.3 795.4L725.6 840.6M662.6 786.3L734.9 831.4M671.9 777.1L744.1 822.2M681.1 768.0L753.3 813.0M690.3 759.0L762.5 803.8M699.5 749.9L771.6 794.7M708.7 740.9L780.7 785.6M717.9 731.9L789.8 776.5M727.0 722.9L798.9 767.4M736.1 714.0L807.9 758.4M745.2 705.1L817.0 749.4M754.2 696.2L826.0 740.4M763.3 687.3L835.0 731.4M772.3 678.4L843.9 722.5M781.3 669.6L852.8 713.5M790.2 660.8L861.7 704.6M799.1 652.0L870.6 695.8M808.1 643.3L879.5 686.9M816.9 634.5L888.3 678.1M825.8 625.8L897.1 669.3M834.7 617.1L905.9 660.5M843.5 608.4L914.7 651.7" stroke="#3858c8" stroke-width="2.6" fill="none" stroke-opacity="0.9"/>
<path d="M466.7 1002.7L857.7 617.1M492.4 1019.2L882.6 632.2M518.2 1035.8L907.5 647.4" stroke="#5232a8" stroke-width="3" fill="none" stroke-opacity="0.95" stroke-dasharray="6,3"/>
<line x1="452.1" y1="993.2" x2="843.5" y2="608.4" stroke="#2a4860" stroke-width="1.2"/>
<path d="M452.1 993.2L525.5 1040.5M510.8 935.5L583.9 982.2M568.5 878.8L641.3 924.9M625.3 823.0L697.7 868.5M681.1 768.0L753.3 813.0M736.1 714.0L807.9 758.4M790.2 660.8L861.7 704.6M843.5 608.4L914.7 651.7" stroke="#66c2e2" stroke-width="2.2" fill="none" stroke-opacity="0.95"/>
<polygon points="452.1,970.2 525.5,1017.5 525.5,1021.0 452.1,973.7" fill="#3a5c6e"/>
<polygon points="525.5,1017.5 914.7,629.3 914.7,632.7 525.5,1021.0" fill="#466878"/>
<polygon points="452.1,970.2 525.5,1017.5 914.7,629.3 843.5,586.0" fill="#5a7c8a"/>
<path d="M452.1 970.2L525.5 1017.5M461.9 960.6L535.3 1007.8M471.7 950.9L545.1 998.0M481.5 941.3L554.8 988.3M491.3 931.7L564.5 978.6M501.0 922.2L574.2 969.0M510.8 912.6L583.9 959.3M520.4 903.1L593.5 949.7M530.1 893.6L603.1 940.1M539.7 884.2L612.7 930.6M549.3 874.7L622.3 921.1M558.9 865.3L631.8 911.5M568.5 856.0L641.3 902.1M578.0 846.6L650.8 892.6M587.5 837.3L660.2 883.2M597.0 828.0L669.6 873.8M606.4 818.7L679.0 864.4M615.9 809.4L688.4 855.1M625.3 800.2L697.7 845.7M634.6 791.0L707.1 836.4M644.0 781.8L716.4 827.2M653.3 772.7L725.6 817.9M662.6 763.6L734.9 808.7M671.9 754.5L744.1 799.5M681.1 745.4L753.3 790.3M690.3 736.3L762.5 781.2M699.5 727.3L771.6 772.1M708.7 718.3L780.7 763.0M717.9 709.3L789.8 753.9M727.0 700.3L798.9 744.8M736.1 691.4L807.9 735.8M745.2 682.5L817.0 726.8M754.2 673.6L826.0 717.8M763.3 664.7L835.0 708.9M772.3 655.9L843.9 699.9M781.3 647.1L852.8 691.0M790.2 638.3L861.7 682.1M799.1 629.5L870.6 673.3M808.1 620.8L879.5 664.4M816.9 612.0L888.3 655.6M825.8 603.3L897.1 646.8M834.7 594.7L905.9 638.1M843.5 586.0L914.7 629.3" stroke="#3858c8" stroke-width="2.6" fill="none" stroke-opacity="0.9"/>
<path d="M466.7 979.7L857.7 594.7M492.4 996.2L882.6 609.8M518.2 1012.8L907.5 625.0" stroke="#5232a8" stroke-width="3" fill="none" stroke-opacity="0.95" stroke-dasharray="6,3"/>
<line x1="452.1" y1="970.2" x2="843.5" y2="586.0" stroke="#2a4860" stroke-width="1.2"/>
<path d="M452.1 970.2L525.5 1017.5M510.8 912.6L583.9 959.3M568.5 856.0L641.3 902.1M625.3 800.2L697.7 845.7M681.1 745.4L753.3 790.3M736.1 691.4L807.9 735.8M790.2 638.3L861.7 682.1M843.5 586.0L914.7 629.3" stroke="#66c2e2" stroke-width="2.2" fill="none" stroke-opacity="0.95"/>
<polygon points="452.1,946.2 525.5,993.5 525.5,997.0 452.1,949.7" fill="#3a5c6e"/>
<polygon points="525.5,993.5 914.7,605.9 914.7,609.3 525.5,997.0" fill="#466878"/>
<polygon points="452.1,946.2 525.5,993.5 914.7,605.9 843.5,562.6" fill="#5a7c8a"/>
<path d="M452.1 946.2L525.5 993.5M461.9 936.6L535.3 983.8M471.7 926.9L545.1 974.1M481.5 917.3L554.8 964.4M491.3 907.8L564.5 954.7M501.0 898.2L574.2 945.0M510.8 888.7L583.9 935.4M520.4 879.2L593.5 925.8M530.1 869.7L603.1 916.3M539.7 860.3L612.7 906.7M549.3 850.9L622.3 897.2M558.9 841.5L631.8 887.7M568.5 832.1L641.3 878.2M578.0 822.8L650.8 868.8M587.5 813.5L660.2 859.4M597.0 804.2L669.6 850.0M606.4 794.9L679.0 840.6M615.9 785.7L688.4 831.3M625.3 776.5L697.7 822.0M634.6 767.3L707.1 812.7M644.0 758.1L716.4 803.5M653.3 749.0L725.6 794.2M662.6 739.9L734.9 785.0M671.9 730.8L744.1 775.8M681.1 721.7L753.3 766.7M690.3 712.7L762.5 757.5M699.5 703.7L771.6 748.4M708.7 694.7L780.7 739.3M717.9 685.7L789.8 730.3M727.0 676.8L798.9 721.2M736.1 667.8L807.9 712.2M745.2 658.9L817.0 703.2M754.2 650.1L826.0 694.3M763.3 641.2L835.0 685.3M772.3 632.4L843.9 676.4M781.3 623.6L852.8 667.5M790.2 614.8L861.7 658.7M799.1 606.1L870.6 649.8M808.1 597.3L879.5 641.0M816.9 588.6L888.3 632.2M825.8 579.9L897.1 623.4M834.7 571.3L905.9 614.7M843.5 562.6L914.7 605.9" stroke="#3858c8" stroke-width="2.6" fill="none" stroke-opacity="0.9"/>
<path d="M466.7 955.7L857.7 571.3M492.4 972.2L882.6 586.4M518.2 988.8L907.5 601.6" stroke="#5232a8" stroke-width="3" fill="none" stroke-opacity="0.95" stroke-dasharray="6,3"/>
<line x1="452.1" y1="946.2" x2="843.5" y2="562.6" stroke="#2a4860" stroke-width="1.2"/>
<path d="M452.1 946.2L525.5 993.5M510.8 888.7L583.9 935.4M568.5 832.1L641.3 878.2M625.3 776.5L697.7 822.0M681.1 721.7L753.3 766.7M736.1 667.8L807.9 712.2M790.2 614.8L861.7 658.7M843.5 562.6L914.7 605.9" stroke="#66c2e2" stroke-width="2.2" fill="none" stroke-opacity="0.95"/>
<polygon points="452.1,921.2 525.5,968.5 525.5,972.0 452.1,924.7" fill="#3a5c6e"/>
<polygon points="525.5,968.5 914.7,581.5 914.7,585.0 525.5,972.0" fill="#466878"/>
<polygon points="452.1,921.2 525.5,968.5 914.7,581.5 843.5,538.2" fill="#5a7c8a"/>
<path d="M452.1 921.2L525.5 968.5M461.9 911.6L535.3 958.8M471.7 902.0L545.1 949.1M481.5 892.4L554.8 939.4M491.3 882.8L564.5 929.7M501.0 873.3L574.2 920.1M510.8 863.8L583.9 910.5M520.4 854.3L593.5 900.9M530.1 844.9L603.1 891.4M539.7 835.4L612.7 881.8M549.3 826.0L622.3 872.3M558.9 816.7L631.8 862.9M568.5 807.3L641.3 853.4M578.0 798.0L650.8 844.0M587.5 788.7L660.2 834.6M597.0 779.4L669.6 825.2M606.4 770.2L679.0 815.9M615.9 760.9L688.4 806.6M625.3 751.7L697.7 797.3M634.6 742.6L707.1 788.0M644.0 733.4L716.4 778.8M653.3 724.3L725.6 769.5M662.6 715.2L734.9 760.3M671.9 706.1L744.1 751.2M681.1 697.1L753.3 742.0M690.3 688.0L762.5 732.9M699.5 679.0L771.6 723.8M708.7 670.1L780.7 714.7M717.9 661.1L789.8 705.7M727.0 652.2L798.9 696.7M736.1 643.3L807.9 687.7M745.2 634.4L817.0 678.7M754.2 625.5L826.0 669.8M763.3 616.7L835.0 660.8M772.3 607.9L843.9 651.9M781.3 599.1L852.8 643.0M790.2 590.3L861.7 634.2M799.1 581.6L870.6 625.4M808.1 572.9L879.5 616.5M816.9 564.2L888.3 607.8M825.8 555.5L897.1 599.0M834.7 546.9L905.9 590.3M843.5 538.2L914.7 581.5" stroke="#3858c8" stroke-width="2.6" fill="none" stroke-opacity="0.9"/>
<path d="M466.7 930.7L857.7 546.9M492.4 947.2L882.6 562.0M518.2 963.8L907.5 577.2" stroke="#5232a8" stroke-width="3" fill="none" stroke-opacity="0.95" stroke-dasharray="6,3"/>
<line x1="452.1" y1="921.2" x2="843.5" y2="538.2" stroke="#2a4860" stroke-width="1.2"/>
<path d="M452.1 921.2L525.5 968.5M510.8 863.8L583.9 910.5M568.5 807.3L641.3 853.4M625.3 751.7L697.7 797.3M681.1 697.1L753.3 742.0M736.1 643.3L807.9 687.7M790.2 590.3L861.7 634.2M843.5 538.2L914.7 581.5" stroke="#66c2e2" stroke-width="2.2" fill="none" stroke-opacity="0.95"/>
<line x1="506.6" y1="956.3" x2="506.6" y2="934.3" stroke="#66c2e2" stroke-width="2.0"/>
<line x1="565.0" y1="898.4" x2="565.0" y2="876.5" stroke="#66c2e2" stroke-width="2.0"/>
<line x1="622.5" y1="841.4" x2="622.5" y2="819.6" stroke="#66c2e2" stroke-width="2.0"/>
<line x1="679.1" y1="785.4" x2="679.1" y2="763.7" stroke="#66c2e2" stroke-width="2.0"/>
<line x1="734.7" y1="730.4" x2="734.7" y2="708.7" stroke="#66c2e2" stroke-width="2.0"/>
<line x1="789.4" y1="676.1" x2="789.4" y2="654.5" stroke="#66c2e2" stroke-width="2.0"/>
<line x1="843.3" y1="622.8" x2="843.3" y2="601.3" stroke="#66c2e2" stroke-width="2.0"/>
<line x1="896.3" y1="570.3" x2="896.3" y2="548.9" stroke="#66c2e2" stroke-width="2.0"/>
<polygon points="582.6,1064.6 654.7,1099.0 654.7,1105.0 582.6,1070.6" fill="#6e4610"/>
<polygon points="582.6,1064.6 654.7,1099.0 1039.8,703.7 970.0,673.0" fill="#8c5c18"/>
<polygon points="654.7,1099.0 1039.8,703.7 1039.8,709.6 654.7,1105.0" fill="#6e4610"/>
<line x1="598.8" y1="1072.3" x2="598.8" y2="978.3" stroke="#66c2e2" stroke-width="2.0"/>
<line x1="654.7" y1="1099.0" x2="654.7" y2="1005.0" stroke="#66c2e2" stroke-width="2.0"/>
<line x1="656.9" y1="1013.5" x2="656.9" y2="919.8" stroke="#66c2e2" stroke-width="2.0"/>
<line x1="712.5" y1="1039.7" x2="712.5" y2="946.0" stroke="#66c2e2" stroke-width="2.0"/>
<line x1="713.9" y1="955.6" x2="713.9" y2="862.2" stroke="#66c2e2" stroke-width="2.0"/>
<line x1="769.3" y1="981.4" x2="769.3" y2="888.1" stroke="#66c2e2" stroke-width="2.0"/>
<line x1="770.1" y1="898.6" x2="770.1" y2="805.6" stroke="#66c2e2" stroke-width="2.0"/>
<line x1="825.2" y1="924.0" x2="825.2" y2="831.0" stroke="#66c2e2" stroke-width="2.0"/>
<line x1="825.3" y1="842.6" x2="825.3" y2="750.0" stroke="#66c2e2" stroke-width="2.0"/>
<line x1="880.2" y1="867.6" x2="880.2" y2="775.0" stroke="#66c2e2" stroke-width="2.0"/>
<line x1="879.6" y1="787.5" x2="879.6" y2="695.2" stroke="#66c2e2" stroke-width="2.0"/>
<line x1="934.2" y1="812.1" x2="934.2" y2="719.8" stroke="#66c2e2" stroke-width="2.0"/>
<line x1="933.1" y1="733.3" x2="933.1" y2="641.3" stroke="#66c2e2" stroke-width="2.0"/>
<line x1="987.5" y1="757.5" x2="987.5" y2="665.5" stroke="#66c2e2" stroke-width="2.0"/>
<line x1="985.7" y1="679.9" x2="985.7" y2="588.2" stroke="#66c2e2" stroke-width="2.0"/>
<line x1="1039.8" y1="703.7" x2="1039.8" y2="612.1" stroke="#66c2e2" stroke-width="2.0"/>
<polygon points="582.6,1067.2 657.1,1091.1 657.1,1094.6 582.6,1070.7" fill="#3a5c6e"/>
<polygon points="657.1,1091.1 1042.1,695.9 1042.1,699.4 657.1,1094.6" fill="#466878"/>
<polygon points="582.6,1067.2 657.1,1091.1 1042.1,695.9 970.0,675.5" fill="#506f80"/>
<path d="M582.6 1067.2L657.1 1091.1M592.4 1057.3L666.8 1081.2M602.1 1047.5L676.4 1071.2M611.8 1037.7L686.1 1061.4M621.5 1027.9L695.7 1051.5M631.1 1018.2L705.3 1041.6M640.7 1008.4L714.8 1031.8M650.3 998.8L724.4 1022.1M659.9 989.1L733.9 1012.3M669.4 979.4L743.3 1002.6M678.9 969.8L752.8 992.9M688.4 960.2L762.2 983.2M697.9 950.7L771.6 973.5M707.3 941.1L781.0 963.9M716.7 931.6L790.3 954.3M726.1 922.1L799.7 944.7M735.4 912.7L809.0 935.2M744.8 903.3L818.2 925.7M754.1 893.8L827.5 916.2M763.3 884.5L836.7 906.7M772.6 875.1L845.9 897.3M781.8 865.8L855.1 887.9M791.0 856.5L864.2 878.5M800.2 847.2L873.4 869.1M809.4 837.9L882.5 859.8M818.5 828.7L891.5 850.5M827.6 819.5L900.6 841.2M836.7 810.3L909.6 831.9M845.7 801.2L918.6 822.7M854.8 792.0L927.6 813.5M863.8 782.9L936.5 804.3M872.7 773.8L945.5 795.1M881.7 764.8L954.4 786.0M890.6 755.7L963.2 776.9M899.6 746.7L972.1 767.8M908.4 737.8L980.9 758.7M917.3 728.8L989.7 749.7M926.1 719.9L998.5 740.7M935.0 710.9L1007.3 731.7M943.8 702.0L1016.0 722.7M952.5 693.2L1024.7 713.8M961.3 684.3L1033.4 704.8M970.0 675.5L1042.1 695.9" stroke="#48a8cc" stroke-width="1.4" fill="none" stroke-opacity="0.8"/>
<path d="M591.5 1070.0L978.6 677.9M616.0 1077.9L1002.4 684.7M640.6 1085.8L1026.2 691.4" stroke="#1a2026" stroke-width="2.6" fill="none" stroke-opacity="0.85" stroke-dasharray="7,5"/>
<line x1="582.6" y1="1067.2" x2="970.0" y2="675.5" stroke="#2a4860" stroke-width="1.2"/>
<path d="M582.6 1067.2L657.1 1091.1M640.7 1008.4L714.8 1031.8M697.9 950.7L771.6 973.5M754.1 893.8L827.5 916.2M809.4 837.9L882.5 859.8M863.8 782.9L936.5 804.3M917.3 728.8L989.7 749.7M970.0 675.5L1042.1 695.9" stroke="#66c2e2" stroke-width="2.2" fill="none" stroke-opacity="0.95"/>
<polygon points="582.6,1044.2 657.1,1068.1 657.1,1071.6 582.6,1047.7" fill="#3a5c6e"/>
<polygon points="657.1,1068.1 1042.1,673.5 1042.1,676.9 657.1,1071.6" fill="#466878"/>
<polygon points="582.6,1044.2 657.1,1068.1 1042.1,673.5 970.0,653.1" fill="#506f80"/>
<path d="M582.6 1044.2L657.1 1068.1M592.4 1034.3L666.8 1058.2M602.1 1024.5L676.4 1048.3M611.8 1014.7L686.1 1038.4M621.5 1005.0L695.7 1028.5M631.1 995.2L705.3 1018.7M640.7 985.5L714.8 1008.9M650.3 975.8L724.4 999.1M659.9 966.2L733.9 989.4M669.4 956.6L743.3 979.7M678.9 947.0L752.8 970.0M688.4 937.4L762.2 960.3M697.9 927.8L771.6 950.7M707.3 918.3L781.0 941.1M716.7 908.8L790.3 931.5M726.1 899.3L799.7 922.0M735.4 889.9L809.0 912.4M744.8 880.5L818.2 902.9M754.1 871.1L827.5 893.4M763.3 861.7L836.7 884.0M772.6 852.4L845.9 874.6M781.8 843.1L855.1 865.2M791.0 833.8L864.2 855.8M800.2 824.5L873.4 846.4M809.4 815.3L882.5 837.1M818.5 806.0L891.5 827.8M827.6 796.9L900.6 818.5M836.7 787.7L909.6 809.3M845.7 778.5L918.6 800.1M854.8 769.4L927.6 790.9M863.8 760.3L936.5 781.7M872.7 751.3L945.5 772.6M881.7 742.2L954.4 763.4M890.6 733.2L963.2 754.3M899.6 724.2L972.1 745.3M908.4 715.2L980.9 736.2M917.3 706.3L989.7 727.2M926.1 697.4L998.5 718.2M935.0 688.5L1007.3 709.2M943.8 679.6L1016.0 700.2M952.5 670.7L1024.7 691.3M961.3 661.9L1033.4 682.4M970.0 653.1L1042.1 673.5" stroke="#48a8cc" stroke-width="1.4" fill="none" stroke-opacity="0.8"/>
<path d="M591.5 1047.0L978.6 655.5M616.0 1054.9L1002.4 662.2M640.6 1062.8L1026.2 669.0" stroke="#1a2026" stroke-width="2.6" fill="none" stroke-opacity="0.85" stroke-dasharray="7,5"/>
<line x1="582.6" y1="1044.2" x2="970.0" y2="653.1" stroke="#2a4860" stroke-width="1.2"/>
<path d="M582.6 1044.2L657.1 1068.1M640.7 985.5L714.8 1008.9M697.9 927.8L771.6 950.7M754.1 871.1L827.5 893.4M809.4 815.3L882.5 837.1M863.8 760.3L936.5 781.7M917.3 706.3L989.7 727.2M970.0 653.1L1042.1 673.5" stroke="#66c2e2" stroke-width="2.2" fill="none" stroke-opacity="0.95"/>
<polygon points="582.6,1020.2 657.1,1044.1 657.1,1047.6 582.6,1023.7" fill="#3a5c6e"/>
<polygon points="657.1,1044.1 1042.1,650.1 1042.1,653.5 657.1,1047.6" fill="#466878"/>
<polygon points="582.6,1020.2 657.1,1044.1 1042.1,650.1 970.0,629.7" fill="#506f80"/>
<path d="M582.6 1020.2L657.1 1044.1M592.4 1010.4L666.8 1034.2M602.1 1000.6L676.4 1024.3M611.8 990.8L686.1 1014.4M621.5 981.0L695.7 1004.6M631.1 971.3L705.3 994.8M640.7 961.6L714.8 985.0M650.3 951.9L724.4 975.2M659.9 942.3L733.9 965.5M669.4 932.7L743.3 955.8M678.9 923.1L752.8 946.1M688.4 913.5L762.2 936.5M697.9 904.0L771.6 926.9M707.3 894.5L781.0 917.3M716.7 885.0L790.3 907.7M726.1 875.6L799.7 898.2M735.4 866.1L809.0 888.7M744.8 856.7L818.2 879.2M754.1 847.3L827.5 869.7M763.3 838.0L836.7 860.3M772.6 828.7L845.9 850.9M781.8 819.4L855.1 841.5M791.0 810.1L864.2 832.1M800.2 800.8L873.4 822.8M809.4 791.6L882.5 813.5M818.5 782.4L891.5 804.2M827.6 773.2L900.6 794.9M836.7 764.1L909.6 785.7M845.7 754.9L918.6 776.5M854.8 745.8L927.6 767.3M863.8 736.8L936.5 758.1M872.7 727.7L945.5 749.0M881.7 718.7L954.4 739.9M890.6 709.7L963.2 730.8M899.6 700.7L972.1 721.7M908.4 691.7L980.9 712.7M917.3 682.8L989.7 703.7M926.1 673.9L998.5 694.7M935.0 665.0L1007.3 685.7M943.8 656.1L1016.0 676.8M952.5 647.3L1024.7 667.9M961.3 638.5L1033.4 659.0M970.0 629.7L1042.1 650.1" stroke="#48a8cc" stroke-width="1.4" fill="none" stroke-opacity="0.8"/>
<path d="M591.5 1023.0L978.6 632.1M616.0 1030.9L1002.4 638.8M640.6 1038.8L1026.2 645.6" stroke="#1a2026" stroke-width="2.6" fill="none" stroke-opacity="0.85" stroke-dasharray="7,5"/>
<line x1="582.6" y1="1020.2" x2="970.0" y2="629.7" stroke="#2a4860" stroke-width="1.2"/>
<path d="M582.6 1020.2L657.1 1044.1M640.7 961.6L714.8 985.0M697.9 904.0L771.6 926.9M754.1 847.3L827.5 869.7M809.4 791.6L882.5 813.5M863.8 736.8L936.5 758.1M917.3 682.8L989.7 703.7M970.0 629.7L1042.1 650.1" stroke="#66c2e2" stroke-width="2.2" fill="none" stroke-opacity="0.95"/>
<polygon points="582.6,995.2 657.1,1019.1 657.1,1022.6 582.6,998.7" fill="#3a5c6e"/>
<polygon points="657.1,1019.1 1042.1,625.7 1042.1,629.2 657.1,1022.6" fill="#466878"/>
<polygon points="582.6,995.2 657.1,1019.1 1042.1,625.7 970.0,605.3" fill="#506f80"/>
<path d="M582.6 995.2L657.1 1019.1M592.4 985.4L666.8 1009.2M602.1 975.6L676.4 999.3M611.8 965.8L686.1 989.5M621.5 956.1L695.7 979.7M631.1 946.4L705.3 969.9M640.7 936.7L714.8 960.1M650.3 927.1L724.4 950.4M659.9 917.4L733.9 940.6M669.4 907.8L743.3 931.0M678.9 898.3L752.8 921.3M688.4 888.7L762.2 911.7M697.9 879.2L771.6 902.1M707.3 869.7L781.0 892.5M716.7 860.2L790.3 882.9M726.1 850.8L799.7 873.4M735.4 841.4L809.0 863.9M744.8 832.0L818.2 854.4M754.1 822.6L827.5 845.0M763.3 813.3L836.7 835.5M772.6 804.0L845.9 826.1M781.8 794.7L855.1 816.8M791.0 785.4L864.2 807.4M800.2 776.2L873.4 798.1M809.4 767.0L882.5 788.8M818.5 757.8L891.5 779.5M827.6 748.6L900.6 770.3M836.7 739.5L909.6 761.1M845.7 730.4L918.6 751.9M854.8 721.3L927.6 742.7M863.8 712.2L936.5 733.6M872.7 703.2L945.5 724.5M881.7 694.2L954.4 715.4M890.6 685.2L963.2 706.3M899.6 676.2L972.1 697.2M908.4 667.3L980.9 688.2M917.3 658.3L989.7 679.2M926.1 649.4L998.5 670.2M935.0 640.6L1007.3 661.3M943.8 631.7L1016.0 652.4M952.5 622.9L1024.7 643.5M961.3 614.1L1033.4 634.6M970.0 605.3L1042.1 625.7" stroke="#48a8cc" stroke-width="1.4" fill="none" stroke-opacity="0.8"/>
<path d="M591.5 998.0L978.6 607.7M616.0 1005.9L1002.4 614.5M640.6 1013.8L1026.2 621.2" stroke="#1a2026" stroke-width="2.6" fill="none" stroke-opacity="0.85" stroke-dasharray="7,5"/>
<line x1="582.6" y1="995.2" x2="970.0" y2="605.3" stroke="#2a4860" stroke-width="1.2"/>
<line x1="582.6" y1="995.2" x2="970.0" y2="605.3" stroke="#4a3426" stroke-width="2.2"/>
<path d="M582.6 995.2L657.1 1019.1M640.7 936.7L714.8 960.1M697.9 879.2L771.6 902.1M754.1 822.6L827.5 845.0M809.4 767.0L882.5 788.8M863.8 712.2L936.5 733.6M917.3 658.3L989.7 679.2M970.0 605.3L1042.1 625.7" stroke="#66c2e2" stroke-width="2.2" fill="none" stroke-opacity="0.95"/>
<line x1="654.7" y1="1099.0" x2="654.7" y2="1005.0" stroke="#66c2e2" stroke-width="2.0"/>
<line x1="712.5" y1="1039.7" x2="712.5" y2="946.0" stroke="#66c2e2" stroke-width="2.0"/>
<line x1="769.3" y1="981.4" x2="769.3" y2="888.1" stroke="#66c2e2" stroke-width="2.0"/>
<line x1="825.2" y1="924.0" x2="825.2" y2="831.0" stroke="#66c2e2" stroke-width="2.0"/>
<line x1="880.2" y1="867.6" x2="880.2" y2="775.0" stroke="#66c2e2" stroke-width="2.0"/>
<line x1="934.2" y1="812.1" x2="934.2" y2="719.8" stroke="#66c2e2" stroke-width="2.0"/>
<line x1="987.5" y1="757.5" x2="987.5" y2="665.5" stroke="#66c2e2" stroke-width="2.0"/>
<line x1="1039.8" y1="703.7" x2="1039.8" y2="612.1" stroke="#66c2e2" stroke-width="2.0"/>
<line x1="598.8" y1="1000.3" x2="598.8" y2="978.3" stroke="#66c2e2" stroke-width="2.0"/>
<line x1="656.9" y1="941.7" x2="656.9" y2="919.8" stroke="#66c2e2" stroke-width="2.0"/>
<line x1="713.9" y1="884.1" x2="713.9" y2="862.2" stroke="#66c2e2" stroke-width="2.0"/>
<line x1="770.1" y1="827.4" x2="770.1" y2="805.6" stroke="#66c2e2" stroke-width="2.0"/>
<line x1="825.3" y1="771.6" x2="825.3" y2="750.0" stroke="#66c2e2" stroke-width="2.0"/>
<line x1="879.6" y1="716.8" x2="879.6" y2="695.2" stroke="#66c2e2" stroke-width="2.0"/>
<line x1="933.1" y1="662.8" x2="933.1" y2="641.3" stroke="#66c2e2" stroke-width="2.0"/>
<line x1="985.7" y1="609.7" x2="985.7" y2="588.2" stroke="#66c2e2" stroke-width="2.0"/>
<line x1="119.8" y1="943.5" x2="686.8" y2="1214.6" stroke="#1a1a1a" stroke-width="1"/>
<line x1="112.3" y1="970.6" x2="679.0" y2="1242.7" stroke="#1a1a1a" stroke-width="1"/>
<line x1="145.3" y1="861.7" x2="113.7" y2="984.3" stroke="#1a1a1a" stroke-width="1"/>
<polygon points="123.7,945.4 135.0,947.2 132.3,953.0" fill="#1a1a1a"/>
<line x1="198.9" y1="887.3" x2="174.2" y2="982.6" stroke="#1a1a1a" stroke-width="1"/>
<polygon points="177.2,971.0 165.9,969.1 168.7,963.4" fill="#1a1a1a"/>
<polygon points="177.2,971.0 188.5,972.8 185.8,978.6" fill="#1a1a1a"/>
<line x1="264.2" y1="918.5" x2="239.6" y2="1013.8" stroke="#1a1a1a" stroke-width="1"/>
<polygon points="242.6,1002.2 231.3,1000.4 234.0,994.6" fill="#1a1a1a"/>
<polygon points="242.6,1002.2 253.9,1004.0 251.1,1009.8" fill="#1a1a1a"/>
<line x1="318.2" y1="944.3" x2="293.6" y2="1039.6" stroke="#1a1a1a" stroke-width="1"/>
<polygon points="296.6,1028.0 285.3,1026.2 288.0,1020.4" fill="#1a1a1a"/>
<polygon points="296.6,1028.0 307.9,1029.8 305.1,1035.6" fill="#1a1a1a"/>
<line x1="385.8" y1="976.6" x2="361.2" y2="1072.0" stroke="#1a1a1a" stroke-width="1"/>
<polygon points="364.2,1060.3 352.9,1058.5 355.6,1052.7" fill="#1a1a1a"/>
<polygon points="364.2,1060.3 375.5,1062.2 372.7,1068.0" fill="#1a1a1a"/>
<line x1="454.4" y1="1009.3" x2="429.7" y2="1104.7" stroke="#1a1a1a" stroke-width="1"/>
<polygon points="432.7,1093.1 421.4,1091.3 424.2,1085.5" fill="#1a1a1a"/>
<polygon points="432.7,1093.1 444.0,1094.9 441.3,1100.7" fill="#1a1a1a"/>
<line x1="525.5" y1="1043.3" x2="500.9" y2="1138.8" stroke="#1a1a1a" stroke-width="1"/>
<polygon points="503.9,1127.1 492.6,1125.3 495.3,1119.5" fill="#1a1a1a"/>
<polygon points="503.9,1127.1 515.2,1129.0 512.4,1134.8" fill="#1a1a1a"/>
<line x1="582.6" y1="1070.6" x2="558.0" y2="1166.0" stroke="#1a1a1a" stroke-width="1"/>
<polygon points="561.0,1154.4 549.6,1152.6 552.4,1146.8" fill="#1a1a1a"/>
<polygon points="561.0,1154.4 572.3,1156.3 569.5,1162.0" fill="#1a1a1a"/>
<line x1="654.7" y1="1105.0" x2="630.1" y2="1200.5" stroke="#1a1a1a" stroke-width="1"/>
<polygon points="633.1,1188.9 621.7,1187.1 624.5,1181.3" fill="#1a1a1a"/>
<polygon points="633.1,1188.9 644.4,1190.7 641.6,1196.5" fill="#1a1a1a"/>
<line x1="712.2" y1="1132.5" x2="680.2" y2="1256.3" stroke="#1a1a1a" stroke-width="1"/>
<polygon points="690.5,1216.4 679.2,1214.6 682.0,1208.8" fill="#1a1a1a"/>
<polygon points="116.7,972.7 128.0,974.5 125.2,980.3" fill="#1a1a1a"/>
<polygon points="683.2,1244.7 671.9,1242.9 674.6,1237.1" fill="#1a1a1a"/>
<line x1="715.6" y1="1235.6" x2="1169.5" y2="767.0" stroke="#1a1a1a" stroke-width="1"/>
<line x1="739.2" y1="1163.0" x2="1117.2" y2="777.4" stroke="#1a1a1a" stroke-width="1"/>
<line x1="680.0" y1="1182.5" x2="720.0" y2="1246.0" stroke="#1a1a1a" stroke-width="1"/>
<line x1="1134.0" y1="708.0" x2="1173.0" y2="770.0" stroke="#1a1a1a" stroke-width="1"/>
<line x1="713.0" y1="1143.7" x2="743.0" y2="1186.0" stroke="#1a1a1a" stroke-width="1"/>
<line x1="1102.6" y1="739.7" x2="1124.0" y2="780.0" stroke="#1a1a1a" stroke-width="1"/>
<line x1="698.4" y1="1202.0" x2="739.2" y2="1163.0" stroke="#1a1a1a" stroke-width="1"/>
<line x1="1117.2" y1="777.4" x2="1150.0" y2="745.0" stroke="#1a1a1a" stroke-width="1"/>
<polygon points="715.6,1235.6 721.0,1225.5 725.6,1229.9" fill="#1a1a1a"/>
<polygon points="1169.5,767.0 1164.1,777.1 1159.5,772.7" fill="#1a1a1a"/>
<polygon points="739.2,1163.0 733.8,1173.1 729.2,1168.7" fill="#1a1a1a"/>
<polygon points="1117.2,777.4 1122.6,767.3 1127.2,771.7" fill="#1a1a1a"/>
<polygon points="698.4,1202.0 703.7,1191.8 708.3,1196.3" fill="#1a1a1a"/>
<polygon points="1150.0,745.0 1144.5,755.0 1140.0,750.5" fill="#1a1a1a"/>
<line x1="58.0" y1="939.0" x2="111.0" y2="939.0" stroke="#555" stroke-width="1.4"/>
<line x1="111.0" y1="939.0" x2="166.4" y2="888.4" stroke="#1a1a1a" stroke-width="1"/>
<polygon points="166.4,888.4 159.8,899.0 155.2,894.0" fill="#1a1a1a"/>
<line x1="140.0" y1="1020.0" x2="183.0" y2="1020.0" stroke="#555" stroke-width="1.4"/>
<line x1="183.0" y1="1020.0" x2="300.0" y2="912.7" stroke="#1a1a1a" stroke-width="1"/>
<polygon points="300.0,912.7 293.5,923.3 288.9,918.3" fill="#1a1a1a"/>
<line x1="268.0" y1="1084.0" x2="322.0" y2="1084.0" stroke="#555" stroke-width="1.4"/>
<line x1="322.0" y1="1084.0" x2="423.2" y2="976.2" stroke="#1a1a1a" stroke-width="1"/>
<polygon points="423.2,976.2 417.5,987.3 412.5,982.6" fill="#1a1a1a"/>
<line x1="404.3" y1="1152.4" x2="452.8" y2="1152.4" stroke="#555" stroke-width="1.4"/>
<line x1="452.8" y1="1152.4" x2="567.4" y2="1041.7" stroke="#1a1a1a" stroke-width="1"/>
<polygon points="567.4,1041.7 561.1,1052.5 556.4,1047.6" fill="#1a1a1a"/>
<line x1="519.8" y1="1217.5" x2="579.0" y2="1217.5" stroke="#555" stroke-width="1.4"/>
<line x1="579.0" y1="1217.5" x2="692.6" y2="1103.0" stroke="#1a1a1a" stroke-width="1"/>
<polygon points="692.6,1103.0 686.6,1113.9 681.7,1109.1" fill="#1a1a1a"/>
<text x="83.8" y="923.0" font-size="13" font-family="&quot;Liberation Sans&quot;, sans-serif"  text-anchor="middle" dominant-baseline="central" fill="#1a1a1a" font-weight="bold" transform="rotate(0.0 83.8 923.0)">補助通路</text>
<text x="162.2" y="1007.0" font-size="14" font-family="&quot;Liberation Sans&quot;, sans-serif"  text-anchor="middle" dominant-baseline="central" fill="#1a1a1a" font-weight="bold" transform="rotate(0.0 162.2 1007.0)">Pic通路</text>
<text x="293.9" y="1070.9" font-size="13" font-family="&quot;Liberation Sans&quot;, sans-serif"  text-anchor="middle" dominant-baseline="central" fill="#1a1a1a" font-weight="bold" transform="rotate(0.0 293.9 1070.9)">補充通路</text>
<text x="426.1" y="1138.8" font-size="14" font-family="&quot;Liberation Sans&quot;, sans-serif"  text-anchor="middle" dominant-baseline="central" fill="#1a1a1a" font-weight="bold" transform="rotate(0.0 426.1 1138.8)">Pic通路</text>
<text x="545.5" y="1202.8" font-size="13" font-family="&quot;Liberation Sans&quot;, sans-serif"  text-anchor="middle" dominant-baseline="central" fill="#1a1a1a" font-weight="bold" transform="rotate(0.0 545.5 1202.8)">補充通路</text>
<g transform="translate(147.0 945.0) rotate(25.0) scale(0.72 1.10) translate(-147.0 -945.0)">
<text x="147.0" y="945.0" font-size="18" font-family="&quot;Liberation Sans&quot;, sans-serif" text-anchor="middle" dominant-baseline="central" fill="#1a1a1a" font-weight="bold">W1</text></g>
<g transform="translate(205.5 971.5) rotate(25.0) scale(0.72 1.10) translate(-205.5 -971.5)">
<text x="205.5" y="971.5" font-size="18" font-family="&quot;Liberation Sans&quot;, sans-serif" text-anchor="middle" dominant-baseline="central" fill="#1a1a1a" font-weight="bold">W2</text></g>
<g transform="translate(269.0 1001.0) rotate(25.0) scale(0.72 1.10) translate(-269.0 -1001.0)">
<text x="269.0" y="1001.0" font-size="18" font-family="&quot;Liberation Sans&quot;, sans-serif" text-anchor="middle" dominant-baseline="central" fill="#1a1a1a" font-weight="bold">W3</text></g>
<g transform="translate(334.0 1033.0) rotate(25.0) scale(0.72 1.10) translate(-334.0 -1033.0)">
<text x="334.0" y="1033.0" font-size="18" font-family="&quot;Liberation Sans&quot;, sans-serif" text-anchor="middle" dominant-baseline="central" fill="#1a1a1a" font-weight="bold">W2</text></g>
<g transform="translate(401.0 1063.5) rotate(25.0) scale(0.72 1.10) translate(-401.0 -1063.5)">
<text x="401.0" y="1063.5" font-size="18" font-family="&quot;Liberation Sans&quot;, sans-serif" text-anchor="middle" dominant-baseline="central" fill="#1a1a1a" font-weight="bold">W1</text></g>
<g transform="translate(469.0 1096.5) rotate(25.0) scale(0.72 1.10) translate(-469.0 -1096.5)">
<text x="469.0" y="1096.5" font-size="18" font-family="&quot;Liberation Sans&quot;, sans-serif" text-anchor="middle" dominant-baseline="central" fill="#1a1a1a" font-weight="bold">W2</text></g>
<g transform="translate(534.5 1128.0) rotate(25.0) scale(0.72 1.10) translate(-534.5 -1128.0)">
<text x="534.5" y="1128.0" font-size="18" font-family="&quot;Liberation Sans&quot;, sans-serif" text-anchor="middle" dominant-baseline="central" fill="#1a1a1a" font-weight="bold">W3</text></g>
<g transform="translate(600.5 1160.5) rotate(25.0) scale(0.72 1.10) translate(-600.5 -1160.5)">
<text x="600.5" y="1160.5" font-size="18" font-family="&quot;Liberation Sans&quot;, sans-serif" text-anchor="middle" dominant-baseline="central" fill="#1a1a1a" font-weight="bold">W2</text></g>
<g transform="translate(662.5 1190.0) rotate(25.0) scale(0.72 1.10) translate(-662.5 -1190.0)">
<text x="662.5" y="1190.0" font-size="18" font-family="&quot;Liberation Sans&quot;, sans-serif" text-anchor="middle" dominant-baseline="central" fill="#1a1a1a" font-weight="bold">W1</text></g>
<g transform="translate(400.5 1094.0) rotate(25.0) scale(0.72 1.10) translate(-400.5 -1094.0)">
<text x="400.5" y="1094.0" font-size="18" font-family="&quot;Liberation Sans&quot;, sans-serif" text-anchor="middle" dominant-baseline="central" fill="#1a1a1a" font-weight="bold">W</text></g>
<g transform="translate(920.5 962.5) rotate(-45.0) scale(0.75 1.10) translate(-920.5 -962.5)">
<text x="920.5" y="962.5" font-size="18" font-family="&quot;Liberation Sans&quot;, sans-serif" text-anchor="middle" dominant-baseline="central" fill="#1a1a1a" font-weight="bold">L2</text></g>
<g transform="translate(935.2 991.8) rotate(-45.0) scale(0.75 1.10) translate(-935.2 -991.8)">
<text x="935.2" y="991.8" font-size="18" font-family="&quot;Liberation Sans&quot;, sans-serif" text-anchor="middle" dominant-baseline="central" fill="#1a1a1a" font-weight="bold">L</text></g>
<g transform="translate(707.2 1185.5) rotate(-60.0) scale(0.75 1.10) translate(-707.2 -1185.5)">
<text x="707.2" y="1185.5" font-size="18" font-family="&quot;Liberation Sans&quot;, sans-serif" text-anchor="middle" dominant-baseline="central" fill="#1a1a1a" font-weight="bold">L1</text></g>
<g transform="translate(1129.0 750.0) rotate(-45.0) scale(0.75 1.10) translate(-1129.0 -750.0)">
<text x="1129.0" y="750.0" font-size="18" font-family="&quot;Liberation Sans&quot;, sans-serif" text-anchor="middle" dominant-baseline="central" fill="#1a1a1a" font-weight="bold">L1</text></g></svg>
<div class="t lat" style="left:43.2px;top:15.7px;transform:scale(0.9480,1.0308)">Form1</div>
<div class="t" style="left:17.3px;top:59.3px;transform:scale(0.9722,0.9824)">表紙</div>
<div class="t" style="left:79.6px;top:58.0px;transform:scale(0.8387,0.9056)">フロー棚計算</div>
<div class="t" style="left:52.3px;top:92.8px;transform:scale(0.7253,0.9437)">レイアウト</div>
<div class="t" style="left:80.0px;top:123.1px;transform:scale(0.9722,0.9444)">列数</div>
<div class="t" style="left:174.6px;top:121.1px;transform:scale(1.0180,0.9412)">＊連数</div>
<div class="t" style="left:291.6px;top:125.8px;transform:scale(0.9971,0.8889)">＝棚数計</div>
<div class="t" style="left:462.2px;top:121.0px;transform:scale(1.8214,1.5000)">⇒</div>
<div class="t" style="left:508.1px;top:128.7px;transform:scale(0.9775,0.8833)">＝間口数計</div>
<div class="t" style="left:90.0px;top:182.0px;transform:scale(0.9467,0.8947)">棚充填率</div>
<div class="t" style="left:214.9px;top:185.0px;transform:scale(0.6933,1.0000)">%</div>
<div class="t" style="left:243.8px;top:177.0px;transform:scale(1.8786,1.5000)">⇒</div>
<div class="t" style="left:283.5px;top:184.2px;transform:scale(0.9889,0.8389)">保管容積/棚</div>
<div class="t lat" style="left:477.1px;top:188.8px;transform:scale(0.9130,0.9769)">m3</div>
<div class="t" style="left:502.6px;top:184.5px;transform:scale(1.8000,1.5000)">＊</div>
<div class="t" style="left:535.6px;top:186.0px;transform:scale(0.9347,0.9722)">棚数計= 保管容積計</div>
<div class="t lat" style="left:776.1px;top:189.1px;transform:scale(0.8696,0.9615)">m3</div>
<div class="t" style="left:466.0px;top:273.6px;transform:scale(0.9759,0.9667)">必要幅</div>
<div class="t" style="left:614.0px;top:273.6px;transform:scale(0.9636,0.9667)">必要長</div>
<div class="t" style="left:784.7px;top:273.6px;transform:scale(0.9602,0.9667)">必要面積計</div>
<div class="t lat" style="left:964.8px;top:274.6px;transform:scale(0.9000,1.0923)">m2</div>
<div class="t" style="left:156.7px;top:120.5px;transform:scale(0.7300,1.0462)">4</div>
<div class="t" style="left:272.4px;top:120.2px;transform:scale(0.8111,1.0462)">8</div>
<div class="t" style="left:414.4px;top:122.9px;transform:scale(0.8526,1.0462)">32</div>
<div class="t" style="left:640.6px;top:129.7px;transform:scale(0.8367,1.0462)">960</div>
<div class="t" style="left:185.9px;top:180.5px;transform:scale(0.8526,1.0462)">65</div>
<div class="t" style="left:415.9px;top:181.8px;transform:scale(0.8333,1.0462)">5.0544</div>
<div class="t" style="left:736.6px;top:185.1px;transform:scale(0.8367,1.0462)">162</div>
<div class="t" style="left:549.6px;top:272.7px;transform:scale(0.8412,1.0462)">18300</div>
<div class="t" style="left:693.6px;top:272.7px;transform:scale(0.8412,1.0462)">23990</div>
<div class="t" style="left:922.4px;top:269.7px;transform:scale(0.8097,1.0462)">439</div>
<div class="t" style="left:1132.2px;top:94.1px;transform:scale(0.8926,0.9176)">フロー棚単体仕様</div>
<div class="t" style="left:1172.6px;top:126.1px;transform:scale(0.9944,0.9118)">棚幅</div>
<div class="t" style="left:1329.4px;top:126.1px;transform:scale(0.9446,0.9118)">棚奥行</div>
<div class="t" style="left:1497.7px;top:127.0px;transform:scale(0.9635,0.8611)">最上段高</div>
<div class="t" style="left:1225.5px;top:127.0px;transform:scale(0.8439,0.8923)">2400</div>
<div class="t" style="left:1395.1px;top:127.0px;transform:scale(0.8415,0.8923)">2400</div>
<div class="t" style="left:1605.7px;top:125.4px;transform:scale(0.8293,1.0462)">1700</div>
<div class="t" style="left:1234.5px;top:192.8px;transform:scale(0.9500,0.9000)">棚段数</div>
<div class="t" style="left:1347.8px;top:191.1px;transform:scale(0.8111,1.0462)">5</div>
<div class="t" style="left:1368.8px;top:193.7px;transform:scale(0.8121,0.8500)">==&gt;ケース高</div>
<div class="t" style="left:1503.9px;top:191.3px;transform:scale(0.8367,1.0462)">300</div>
<div class="t" style="left:1183.1px;top:229.8px;transform:scale(0.8913,0.9765)">ケース数/間口</div>
<div class="t" style="left:1348.4px;top:228.4px;transform:scale(0.8111,1.0462)">6</div>
<div class="t" style="left:1368.8px;top:229.8px;transform:scale(0.8121,0.9765)">==&gt;ケース長</div>
<div class="t" style="left:1504.4px;top:228.4px;transform:scale(0.8097,1.0462)">400</div>
<div class="t" style="left:1206.0px;top:269.0px;transform:scale(1.0127,1.0000)">間口数/段</div>
<div class="t" style="left:1350.1px;top:268.7px;transform:scale(0.8111,1.0462)">6</div>
<div class="t" style="left:1370.2px;top:269.0px;transform:scale(0.8208,1.0000)">==&gt;ケース幅</div>
<div class="t" style="left:1500.3px;top:268.7px;transform:scale(0.8367,1.0462)">360</div>
<div class="t" style="left:1569.7px;top:230.6px;transform:scale(0.8387,0.9111)">ケース容積</div>
<div class="t" style="left:1674.7px;top:228.2px;transform:scale(0.8482,1.0462)">0.0432</div>
<div class="t" style="left:1768.5px;top:229.6px;transform:scale(1.0253,0.9647)">間口数/棚</div>
<div class="t" style="left:1883.0px;top:228.2px;transform:scale(0.8526,1.0462)">30</div>
<div class="t" style="left:1935.9px;top:232.6px;transform:scale(0.8867,0.9647)">ケース数/棚</div>
<div class="t" style="left:2046.6px;top:230.0px;transform:scale(0.8367,1.0462)">180</div>
<div class="t" style="left:1819.6px;top:275.6px;transform:scale(1.0000,0.9111)">計算容積/棚</div>
<div class="t" style="left:1959.1px;top:273.5px;transform:scale(0.8391,1.0462)">7.776</div>
<div class="t lat" style="left:2008.1px;top:279.3px;transform:scale(0.9130,0.8462)">m3</div>
<div class="t" style="left:1568.4px;top:339.8px;transform:scale(0.9375,0.8944)">再計算</div>
<div class="t" style="left:45.3px;top:376.9px;transform:scale(0.7199,1.0312)">レイアウトイメージ</div>
<div class="t" style="left:184.4px;top:381.7px;transform:scale(0.8011,0.9471)">フロー棚単体イメージ</div>
<div class="t" style="left:350.9px;top:381.7px;transform:scale(0.8760,0.9471)">フロー棚平面図</div>
<div class="t" style="left:481.8px;top:381.7px;transform:scale(0.8591,0.9471)">フロー側面図</div>
<div class="t" style="left:594.9px;top:381.7px;transform:scale(0.8636,0.9471)">フロー棚正面図</div>
<div class="t" style="left:1232.6px;top:430.6px;transform:scale(0.8084,0.9647)">レイアウト寸法詳細</div>
<div class="t" style="left:1389.0px;top:434.1px;transform:scale(0.9532,0.9412)">棚寸法詳細</div>
<div class="t" style="left:1263.4px;top:491.1px;transform:scale(0.9087,0.9235)">棚設置幅W2</div>
<div class="t" style="left:1397.6px;top:488.9px;transform:scale(0.8293,1.0462)">2400</div>
<div class="t" style="left:1474.7px;top:490.8px;transform:scale(0.9292,0.9471)">棚設置長L2</div>
<div class="t" style="left:1594.4px;top:489.2px;transform:scale(0.8412,1.0462)">18990</div>
<div class="t" style="left:1653.0px;top:490.7px;transform:scale(0.9722,0.9882)">本数</div>
<div class="t" style="left:1729.5px;top:490.9px;transform:scale(0.7300,1.0462)">4</div>
<div class="t" style="left:1773.8px;top:496.0px;transform:scale(0.9574,0.9824)">棚設置面積</div>
<div class="t" style="left:1910.3px;top:495.0px;transform:scale(0.8367,1.0462)">182</div>
<div class="t" style="left:1256.2px;top:535.7px;transform:scale(0.9165,0.8278)">Pic通路幅W3</div>
<div class="t" style="left:1394.3px;top:533.2px;transform:scale(0.8293,1.0462)">2100</div>
<div class="t" style="left:1466.8px;top:535.7px;transform:scale(0.9333,0.8278)">Pic通路長L2</div>
<div class="t" style="left:1594.4px;top:532.4px;transform:scale(0.8412,1.0462)">18990</div>
<div class="t" style="left:1652.0px;top:534.0px;transform:scale(0.9722,1.0000)">本数</div>
<div class="t" style="left:1728.7px;top:532.9px;transform:scale(0.8111,1.0462)">2</div>
<div class="t" style="left:1768.1px;top:539.0px;transform:scale(0.9576,0.9278)">Pic通路面積</div>
<div class="t" style="left:1919.1px;top:537.4px;transform:scale(0.8526,1.0462)">80</div>
<div class="t" style="left:1244.8px;top:587.0px;transform:scale(0.9098,0.9222)">補充通路幅W1</div>
<div class="t" style="left:1397.6px;top:583.8px;transform:scale(0.8293,1.0462)">1500</div>
<div class="t" style="left:1457.0px;top:587.0px;transform:scale(0.9296,0.9222)">補充通路幅L2</div>
<div class="t" style="left:1594.4px;top:583.7px;transform:scale(0.8412,1.0462)">18990</div>
<div class="t" style="left:1652.0px;top:586.0px;transform:scale(0.9722,0.9765)">本数</div>
<div class="t" style="left:1728.7px;top:583.7px;transform:scale(0.8111,1.0462)">3</div>
<div class="t" style="left:1758.0px;top:590.7px;transform:scale(0.9451,0.8722)">補充通路面積</div>
<div class="t" style="left:1919.1px;top:588.1px;transform:scale(0.8526,1.0462)">85</div>
<div class="t" style="left:1250.0px;top:638.0px;transform:scale(0.9278,0.9667)">補助通路幅L1</div>
<div class="t" style="left:1397.6px;top:636.1px;transform:scale(0.8293,1.0462)">2500</div>
<div class="t" style="left:1460.7px;top:638.0px;transform:scale(0.9283,0.9667)">補助通路長W</div>
<div class="t" style="left:1594.4px;top:636.1px;transform:scale(0.8412,1.0462)">18300</div>
<div class="t" style="left:1652.0px;top:637.0px;transform:scale(0.9722,1.0235)">本数</div>
<div class="t" style="left:1728.7px;top:636.1px;transform:scale(0.8111,1.0462)">2</div>
<div class="t" style="left:1756.0px;top:638.0px;transform:scale(0.9628,0.9667)">補助通路面積</div>
<div class="t" style="left:1919.1px;top:636.2px;transform:scale(0.8526,1.0462)">92</div>
<div class="t" style="left:1270.7px;top:692.0px;transform:scale(0.9926,0.9222)">必要幅</div>
<div class="t" style="left:1357.2px;top:687.9px;transform:scale(0.8412,1.0462)">18300</div>
<div class="t" style="left:1419.4px;top:692.0px;transform:scale(0.9745,0.9222)">必要長</div>
<div class="t" style="left:1504.1px;top:687.9px;transform:scale(0.8412,1.0462)">23990</div>
<div class="t" style="left:1751.2px;top:714.1px;transform:scale(0.7958,0.9278)">＊＊レイアウトイメージ参照</div>
<div class="t b" style="left:1225.8px;top:800.7px;transform:scale(1.0092,0.7684)">計算方法</div>
<div class="t b" style="left:1224.9px;top:824.3px;transform:scale(0.8904,0.7250)">1.バラ出荷高流動品グループが何アイテムになるか調べる</div>
<div class="t b" style="left:1224.9px;top:847.8px;transform:scale(0.9299,0.7300)">2.高流動グループの保管に必要な間口寸法をきめる</div>
<div class="t b" style="left:1224.8px;top:871.4px;transform:scale(1.0243,0.7300)">3.■保管できる間口数/■(＝アイテム数/■)及び保管できる容積(計算容積/単)を求める</div>
<div class="t b" style="left:1225.8px;top:895.0px;transform:scale(0.8893,0.7250)">4.間口数計が保管アイテム数より数値が大きくなるようレイアウト(列数・連数)決める</div>
<div class="t b" style="left:1224.8px;top:918.5px;transform:scale(0.9854,0.7750)">5.稼働時の■に保管できる充填率を決める。(稼働時の保管容積/■を求める)</div>
<div class="t b" style="left:1224.8px;top:942.0px;transform:scale(1.0004,0.7850)">6.(保管容積/■)＊レイアウト設定■数＝保管容積計を求める</div>
<div class="t b" style="left:1225.8px;top:991.3px;transform:scale(1.0250,0.8263)">計算例</div>
<div class="t b" style="left:1214.2px;top:1015.0px;transform:scale(1.0568,0.8526)">「保管容積計＝</div>
<div class="t" style="left:1358.7px;top:1013.1px;transform:scale(0.9700,0.9462)">162</div>
<div class="t b" style="left:1399.1px;top:1015.0px;transform:scale(0.8780,0.8526)">m3」で、バラ出荷高流動グループの出荷量が「</div>
<div class="t" style="left:1772.0px;top:1013.1px;transform:scale(0.9895,0.9462)">35</div>
<div class="t b" style="left:1802.2px;top:1015.0px;transform:scale(0.9640,0.8100)">m3/日)であれば「在庫日数</div>
<div class="t" style="left:2035.3px;top:1013.1px;transform:scale(0.9500,0.9615)">4.6</div>
<div class="t b" style="left:2067.0px;top:1014.1px;transform:scale(0.8133,0.8526)">日」となる</div>
<div class="t b" style="left:1225.8px;top:1039.4px;transform:scale(0.9427,0.8211)">高流動品グループの全在庫日数が</div>
<div class="t" style="left:1518.0px;top:1037.1px;transform:scale(1.0000,0.9615)">10</div>
<div class="t b" style="left:1541.6px;top:1039.4px;transform:scale(0.9208,0.7800)">であれば、他の保管設備に</div>
<div class="t" style="left:1768.0px;top:1037.1px;transform:scale(0.9560,0.9615)">5.4</div>
<div class="t b" style="left:1802.5px;top:1039.3px;transform:scale(0.9096,0.7850)">日分の在庫保管することになる</div>
<div class="t b" style="left:1225.8px;top:1064.0px;transform:scale(0.9578,0.7737)">通常フロー■は4-7日分程度の在庫保管がされている</div>
<div class="t" style="left:1926.0px;top:1089.4px;transform:scale(0.9496,0.8105)">計算例再計算</div>
<div class="t" style="left:1303.0px;top:1131.0px;transform:scale(0.8636,0.9474)">は数値を変更して再計算が出来ます</div>
<div class="t" style="left:226.0px;top:1298.8px;transform:scale(0.8185,0.9167)">閉じる</div>
<div class="t" style="left:459.3px;top:1299.7px;transform:scale(0.8438,0.9167)">フロー棚計算へ</div>
<div class="t b" style="left:1590.0px;top:1305.0px;transform:scale(1.2647,1.0211)">物流技術研究所 著作権: 寺本敏幸</div>
<div class="t b" style="left:1982.5px;top:1305.0px;transform:scale(1.2910,1.0211)">有効期間:2025/12/31</div></body></html>
